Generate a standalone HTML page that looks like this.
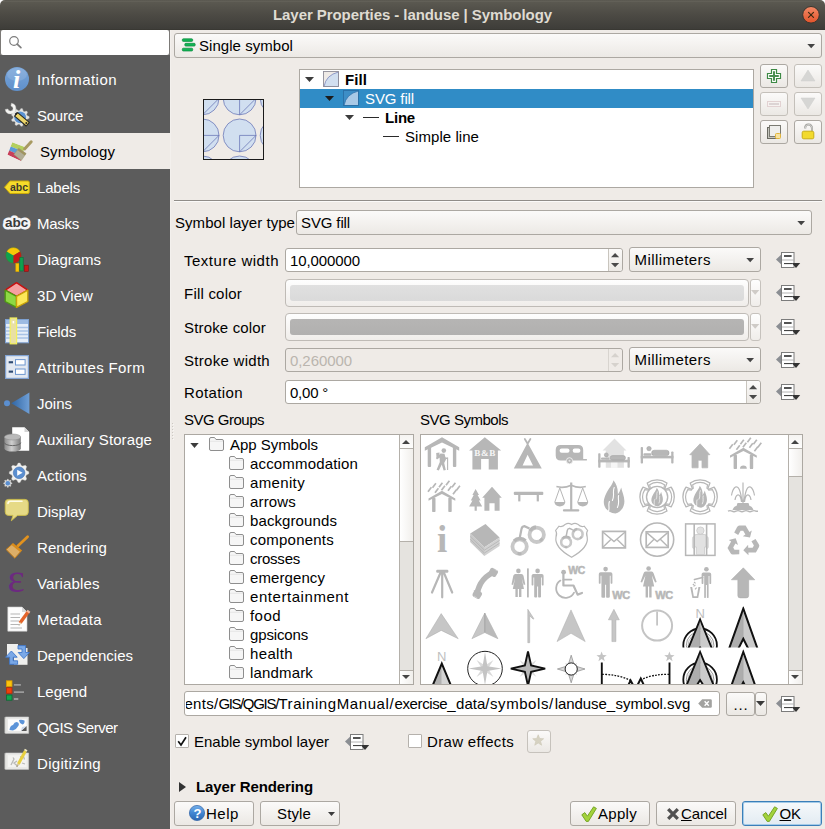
<!DOCTYPE html>
<html><head><meta charset="utf-8"><title>Layer Properties - landuse | Symbology</title>
<style>
html,body{margin:0;padding:0;}
body{width:825px;height:829px;position:relative;overflow:hidden;background:#efebe7;font-family:"Liberation Sans", sans-serif;}
body>div,.a,.t{position:absolute;}
.t{white-space:nowrap;}
svg{display:block;overflow:visible;}
</style></head><body>
<div style="left:0px;top:0px;width:825px;height:30px;background:#fff;"></div>
<div style="left:0px;top:0px;width:825px;height:30px;background:linear-gradient(#55534b 0%,#65635a 4%,#5a5850 8%,#4c4a44 50%,#3e3d39 96%,#36352f 100%);border-radius:5px 5px 0 0;"></div>
<span id="t0" class="t" style="left:273px;top:5.0px;height:20px;line-height:20px;font-size:15px;color:#dfdbd2;font-weight:bold;letter-spacing:-0.073px;">Layer Properties - landuse | Symbology</span>
<svg class="a" style="left:801px;top:6px" width="18" height="18" viewBox="0 0 18 18"><defs><linearGradient id="cg" x1="0" y1="0" x2="0" y2="1"><stop offset="0" stop-color="#f48a67"/><stop offset="1" stop-color="#e2532a"/></linearGradient></defs><circle cx="10" cy="8.8" r="8.3" fill="url(#cg)" stroke="#37352f" stroke-width="1"/><path d="M7.5 6.3 L12.5 11.3 M12.5 6.3 L7.5 11.3" stroke="#3c2a12" stroke-width="1.2" stroke-linecap="round"/></svg>
<div style="left:0px;top:30px;width:170px;height:799px;background:#5c5c5c;"></div>
<div style="left:0px;top:30px;width:170px;height:25px;background:#7c7a77;"></div>
<div style="left:1px;top:30px;width:168px;height:24.5px;background:#fff;border-radius:2px;"></div>
<svg class="a" style="left:7.8px;top:34.9px" width="16" height="16" viewBox="0 0 16 16"><circle cx="6" cy="6" r="4.3" fill="none" stroke="#7d7d7d" stroke-width="1.2"/><path d="M9.2 9.2 L12.9 12.7" stroke="#7d7d7d" stroke-width="1.7" stroke-linecap="round"/></svg>
<span id="t1" class="t" style="left:37px;top:69.5px;height:20px;line-height:20px;font-size:15px;color:#fff;letter-spacing:0.450px;">Information</span>
<span id="t2" class="t" style="left:37px;top:105.5px;height:20px;line-height:20px;font-size:15px;color:#fff;letter-spacing:-0.255px;">Source</span>
<div style="left:0px;top:133px;width:170px;height:36px;background:#efebe7;"></div>
<span id="t3" class="t" style="left:40px;top:141.5px;height:20px;line-height:20px;font-size:15px;color:#000;letter-spacing:0.089px;">Symbology</span>
<span id="t4" class="t" style="left:37px;top:177.5px;height:20px;line-height:20px;font-size:15px;color:#fff;letter-spacing:-0.201px;">Labels</span>
<span id="t5" class="t" style="left:37px;top:213.5px;height:20px;line-height:20px;font-size:15px;color:#fff;letter-spacing:-0.269px;">Masks</span>
<span id="t6" class="t" style="left:37px;top:249.5px;height:20px;line-height:20px;font-size:15px;color:#fff;letter-spacing:-0.023px;">Diagrams</span>
<span id="t7" class="t" style="left:37px;top:285.5px;height:20px;line-height:20px;font-size:15px;color:#fff;letter-spacing:0.058px;">3D View</span>
<span id="t8" class="t" style="left:37px;top:321.5px;height:20px;line-height:20px;font-size:15px;color:#fff;letter-spacing:-0.169px;">Fields</span>
<span id="t9" class="t" style="left:37px;top:357.5px;height:20px;line-height:20px;font-size:15px;color:#fff;letter-spacing:0.365px;">Attributes Form</span>
<span id="t10" class="t" style="left:37px;top:393.5px;height:20px;line-height:20px;font-size:15px;color:#fff;letter-spacing:-0.006px;">Joins</span>
<span id="t11" class="t" style="left:37px;top:429.5px;height:20px;line-height:20px;font-size:15px;color:#fff;letter-spacing:0.095px;">Auxiliary Storage</span>
<span id="t12" class="t" style="left:37px;top:465.5px;height:20px;line-height:20px;font-size:15px;color:#fff;letter-spacing:0.114px;">Actions</span>
<span id="t13" class="t" style="left:37px;top:501.5px;height:20px;line-height:20px;font-size:15px;color:#fff;letter-spacing:-0.070px;">Display</span>
<span id="t14" class="t" style="left:37px;top:537.5px;height:20px;line-height:20px;font-size:15px;color:#fff;letter-spacing:0.087px;">Rendering</span>
<span id="t15" class="t" style="left:37px;top:573.5px;height:20px;line-height:20px;font-size:15px;color:#fff;letter-spacing:0.120px;">Variables</span>
<span id="t16" class="t" style="left:37px;top:609.5px;height:20px;line-height:20px;font-size:15px;color:#fff;letter-spacing:0.307px;">Metadata</span>
<span id="t17" class="t" style="left:37px;top:645.5px;height:20px;line-height:20px;font-size:15px;color:#fff;letter-spacing:0.008px;">Dependencies</span>
<span id="t18" class="t" style="left:37px;top:681.5px;height:20px;line-height:20px;font-size:15px;color:#fff;letter-spacing:-0.010px;">Legend</span>
<span id="t19" class="t" style="left:37px;top:717.5px;height:20px;line-height:20px;font-size:15px;color:#fff;letter-spacing:-0.478px;">QGIS Server</span>
<span id="t20" class="t" style="left:37px;top:753.5px;height:20px;line-height:20px;font-size:15px;color:#fff;letter-spacing:0.314px;">Digitizing</span>
<svg class="a" style="left:5px;top:67px" width="24" height="24" viewBox="0 0 24 24"><defs><linearGradient id="gi" x1="0" y1="0" x2="0" y2="1"><stop offset="0" stop-color="#7aa6da"/><stop offset="1" stop-color="#5f90cb"/></linearGradient></defs><circle cx="12" cy="12" r="12" fill="url(#gi)"/><ellipse cx="12" cy="7.5" rx="10" ry="6.5" fill="#fff" opacity=".13"/><text x="11.6" y="20.8" font-family="Liberation Serif, serif" font-style="italic" font-weight="bold" font-size="26" fill="#fff" text-anchor="middle">i</text></svg>
<svg class="a" style="left:5px;top:103px" width="24" height="24" viewBox="0 0 24 24"><path d="M24.17 13.62 L24.17 15.18 L21.96 16.21 L21.54 17.36 L22.57 19.56 L21.56 20.76 L19.22 20.13 L18.16 20.74 L17.53 23.09 L15.98 23.37 L14.59 21.37 L13.39 21.16 L11.40 22.56 L10.04 21.77 L10.25 19.35 L9.47 18.42 L7.04 18.20 L6.51 16.73 L8.23 15.01 L8.23 13.79 L6.51 12.07 L7.04 10.60 L9.47 10.38 L10.25 9.45 L10.04 7.03 L11.40 6.24 L13.39 7.64 L14.59 7.43 L15.98 5.43 L17.53 5.71 L18.16 8.06 L19.22 8.67 L21.56 8.04 L22.57 9.24 L21.54 11.44 L21.96 12.59Z" fill="#e4e4e2" stroke="#c8c8c6" stroke-width="0.4" stroke-linejoin="round"/><circle cx="15.2" cy="14.4" r="5.9" fill="#5a92d2"/><path d="M8.6 9.3 L11 11.8" stroke="#e9e9e7" stroke-width="3.4"/><path d="M6.44 0.18 A5.4 5.4 0 1 1 0.18 6.44 L2.94 5.95 A2.6 2.6 0 1 0 5.95 2.94 Z" fill="#f4f4f2" stroke="#cfcfcd" stroke-width=".4"/><path d="M12.6 9.6 L24.3 19.4 L21.2 23 L9.6 13.2 Z" fill="#ecd568" stroke="#2c2a22" stroke-width="1.1" stroke-linejoin="round"/><path d="M10.2 11.6 L12 9.8" stroke="#1e1e1e" stroke-width="1.6"/><circle cx="21.3" cy="20" r="1" fill="#2c2a22"/></svg>
<svg class="a" style="left:5px;top:139px" width="24" height="24" viewBox="0 0 24 24"><defs><clipPath id="sh"><path d="M7.2 3.2 L19.8 8 L15.9 21.9 L2.4 15.8 Z"/></clipPath></defs><g clip-path="url(#sh)"><path d="M7.2 3.2 L19.8 8 L18.5 12.6 L5.6 7.4 Z" fill="#b4cf5e"/><path d="M5.6 7.4 L18.5 12.6 L17.2 17.3 L4 11.6 Z" fill="#5a9bd8"/><path d="M4 11.6 L17.2 17.3 L15.9 21.9 L2.4 15.8 Z" fill="#c8405a"/></g><path d="M26.2 2.8 L19.6 10" stroke="#a89a62" stroke-width="3" stroke-linecap="round"/><path d="M13.7 9.3 L21.1 14.5 L16.3 21.5 L8.9 15.4 Z" fill="#b1ad95" stroke="#9a946e" stroke-width=".5"/><path d="M13.7 9.3 L21.1 14.5 L19.8 16.4 L12.4 11 Z" fill="#a09460"/></svg>
<svg class="a" style="left:5px;top:175px" width="24" height="24" viewBox="0 0 24 24"><path d="M-0.5 12.2 L5 6 H23 Q24.3 6 24.3 7.3 V17.2 Q24.3 18.5 23 18.5 H5 Z" fill="#f6dc2a" stroke="#caa90a" stroke-width="1" stroke-linejoin="round"/><text x="14" y="16" font-family="Liberation Sans, sans-serif" font-weight="bold" font-size="10.5" fill="#3a3a30" text-anchor="middle">abc</text></svg>
<svg class="a" style="left:5px;top:211px" width="24" height="24" viewBox="0 0 24 24"><text x="11.5" y="15.8" font-family="Liberation Sans, sans-serif" font-weight="bold" font-size="13.5" fill="#3a3a3a" stroke="#f4f4f6" stroke-width="5" stroke-linejoin="round" paint-order="stroke" text-anchor="middle">abc</text></svg>
<svg class="a" style="left:5px;top:247px" width="24" height="24" viewBox="0 0 24 24"><circle cx="8.4" cy="8.4" r="7.8" fill="#0fa050"/><path d="M8.4 8.4 L1.7 4.4 A7.8 7.8 0 0 1 15.1 4.4 Z" fill="#f8c808"/><path d="M8.4 8.4 L15.1 4.4 A7.8 7.8 0 0 1 8.4 16.2 Z" fill="#c81818"/><circle cx="8.4" cy="8.4" r="7.8" fill="none" stroke="#7a5a10" stroke-width=".5" opacity=".6"/><rect x="10.8" y="16.3" width="3.2" height="8.4" fill="#f8c808" stroke="#d09a00" stroke-width=".6"/><rect x="14.8" y="10.4" width="3.4" height="13.6" fill="#10a050" stroke="#0a7038" stroke-width=".6"/><rect x="19.5" y="18.2" width="3.8" height="6.2" fill="#c81818" stroke="#900c0c" stroke-width=".6"/></svg>
<svg class="a" style="left:5px;top:283px" width="24" height="24" viewBox="0 0 24 24"><path d="M11.5 -0.4 L22.8 7.2 L11.5 13.3 L0.2 7.2 Z" fill="#f6a0a0" stroke="#c81010" stroke-width="1.4" stroke-linejoin="round"/><path d="M0.2 7.2 L11.5 13.3 V24.4 L0.2 18.5 Z" fill="#8ed844" stroke="#4e9a12" stroke-width="1.4" stroke-linejoin="round"/><path d="M22.8 7.2 L11.5 13.3 V24.4 L22.8 18.5 Z" fill="#fbe858" stroke="#c8a208" stroke-width="1.4" stroke-linejoin="round"/></svg>
<svg class="a" style="left:5px;top:319px" width="24" height="24" viewBox="0 0 24 24"><rect x="0.5" y="0.5" width="23" height="23.3" fill="#e6eef8" stroke="#7da0d0" stroke-width="1"/><rect x="1" y="1" width="22" height="4" fill="#9dbbe2"/><path d="M1 8.5 H23 M1 12 H23 M1 15.5 H23 M1 19 H23" stroke="#a9c3e6" stroke-width="1.5"/><rect x="5.2" y="-1" width="6.4" height="25.8" fill="#e9e0a4" stroke="#f4f05a" stroke-width="1.2"/><rect x="7.6" y="2" width="1.6" height="2.4" fill="#fff"/></svg>
<svg class="a" style="left:5px;top:355px" width="24" height="24" viewBox="0 0 24 24"><rect x="0.6" y="0.6" width="22.8" height="22.8" fill="#e2e8f1" stroke="#82a3d3" stroke-width="1.2"/><rect x="3.7" y="6.2" width="4.3" height="2.1" fill="#2d4a72"/><rect x="10.5" y="4.6" width="9.6" height="5.4" fill="#fff" stroke="#6d96cf" stroke-width="1"/><rect x="3.7" y="15.6" width="4.3" height="2.1" fill="#2d4a72"/><rect x="10.5" y="14" width="9.6" height="5.4" fill="#fff" stroke="#6d96cf" stroke-width="1"/></svg>
<svg class="a" style="left:5px;top:391px" width="24" height="24" viewBox="0 0 24 24"><defs><linearGradient id="gj" x1="0" y1="0" x2="1" y2="0"><stop offset="0" stop-color="#2f65a4"/><stop offset="1" stop-color="#6f9fd6"/></linearGradient></defs><circle cx="2" cy="12.3" r="3" fill="#5b8fd0"/><path d="M6.3 12.3 L24.4 1.6 V23 Z" fill="url(#gj)"/></svg>
<svg class="a" style="left:5px;top:427px" width="24" height="24" viewBox="0 0 24 24"><defs><linearGradient id="gd" x1="0" y1="0" x2="1" y2="0"><stop offset="0" stop-color="#8a8a8a"/><stop offset=".45" stop-color="#cfcfcf"/><stop offset="1" stop-color="#7a7a7a"/></linearGradient></defs><path d="M7.2 0.3 H19.5 L24.2 5 V23.7 H7.2 Z" fill="#fff"/><path d="M19.5 0.3 V5 H24.2 Z" fill="#d4d4d4"/><path d="M-0.6 10 V21.6 A8.2 3 0 0 0 15.8 21.6 V10 Z" fill="url(#gd)"/><path d="M-0.6 15.6 A8.2 3 0 0 0 15.8 15.6" fill="none" stroke="#5f5f5f" stroke-width=".9"/><ellipse cx="7.6" cy="10" rx="8.2" ry="3" fill="#b9b9b9" stroke="#8a8a8a" stroke-width=".5"/></svg>
<svg class="a" style="left:5px;top:463px" width="24" height="24" viewBox="0 0 24 24"><path d="M23.85 8.84 L23.85 10.76 L21.37 12.01 L20.80 13.38 L21.68 16.02 L20.32 17.38 L17.68 16.50 L16.31 17.07 L15.06 19.55 L13.14 19.55 L11.89 17.07 L10.52 16.50 L7.88 17.38 L6.52 16.02 L7.40 13.38 L6.83 12.01 L4.35 10.76 L4.35 8.84 L6.83 7.59 L7.40 6.22 L6.52 3.58 L7.88 2.22 L10.52 3.10 L11.89 2.53 L13.14 0.05 L15.06 0.05 L16.31 2.53 L17.68 3.10 L20.32 2.22 L21.68 3.58 L20.80 6.22 L21.37 7.59Z" fill="#f2f2f0" stroke="#c9c9c7" stroke-width="0.4" stroke-linejoin="round"/><circle cx="14.1" cy="9.8" r="5.8" fill="#5b8fd0" stroke="#3f6fb0" stroke-width=".6"/><path d="M12.2 6.8 L17.6 9.8 L12.2 12.8 Z" fill="#fff"/><path d="M7.08 19.88 L7.08 20.72 L5.86 21.23 L5.62 21.81 L6.12 23.03 L5.53 23.62 L4.31 23.12 L3.73 23.36 L3.22 24.58 L2.38 24.58 L1.87 23.36 L1.29 23.12 L0.07 23.62 L-0.52 23.03 L-0.02 21.81 L-0.26 21.23 L-1.48 20.72 L-1.48 19.88 L-0.26 19.37 L-0.02 18.79 L-0.52 17.57 L0.07 16.98 L1.29 17.48 L1.87 17.24 L2.38 16.02 L3.22 16.02 L3.73 17.24 L4.31 17.48 L5.53 16.98 L6.12 17.57 L5.62 18.79 L5.86 19.37Z" fill="#dcdcda" stroke="#b9b9b7" stroke-width="0.3" stroke-linejoin="round"/><circle cx="2.8" cy="20.3" r="2.3" fill="#5b8fd0"/></svg>
<svg class="a" style="left:5px;top:499px" width="24" height="24" viewBox="0 0 24 24"><path d="M3.5 0.4 H20 Q23.3 0.4 23.3 3.7 V13 Q23.3 16.4 20 16.4 H12.5 L6.3 21.8 L8 16.4 H3.5 Q0.2 16.4 0.2 13 V3.7 Q0.2 0.4 3.5 0.4 Z" fill="#e6da86" stroke="#cdbd4a" stroke-width=".9" stroke-linejoin="round"/><path d="M3 4.5 Q3 2.2 5.5 2.2 H17" fill="none" stroke="#fdfbe6" stroke-width="1.6" stroke-linecap="round"/></svg>
<svg class="a" style="left:5px;top:535px" width="24" height="24" viewBox="0 0 24 24"><path d="M22.6 1.8 L12.8 11" stroke="#e2921e" stroke-width="2.8" stroke-linecap="round"/><path d="M8 8.4 L16.7 15.4 L9.8 23.2 L1.1 14.5 Z" fill="#dcae68" stroke="#c27c18" stroke-width="1" stroke-linejoin="round"/><path d="M8 8.4 L16.7 15.4 L15.2 17.1 L6.5 9.9 Z" fill="#d98c1c"/></svg>
<svg class="a" style="left:5px;top:571px" width="24" height="24" viewBox="0 0 24 24"><text x="11.2" y="21" font-family="Liberation Serif, serif" font-size="41" fill="#6c2a80" text-anchor="middle">ε</text></svg>
<svg class="a" style="left:5px;top:607px" width="24" height="24" viewBox="0 0 24 24"><path d="M2.8 0 H17 L22 5 V24.2 H2.8 Z" fill="#fdfdfd" stroke="#c9c9c9" stroke-width=".6"/><path d="M17 0 V5 H22 Z" fill="#d9d9d9"/><path d="M5.5 7 H15 M5.5 10.5 H15 M5.5 14 H14 M5.5 17.5 H14 M5.5 21 H17" stroke="#b5b5b5" stroke-width="1.2"/><path d="M23.4 4.6 L15 16" stroke="#e4642a" stroke-width="3.4"/><path d="M24 3.8 L22.8 5.4" stroke="#f2b9a0" stroke-width="3.4"/><path d="M15.6 15.2 L13.6 18.6 L17 16.6 Z" fill="#e8d6b0"/><path d="M14.3 17.4 L13.6 18.6 L14.8 17.9 Z" fill="#333"/></svg>
<svg class="a" style="left:5px;top:643px" width="24" height="24" viewBox="0 0 24 24"><rect x="2" y="1" width="11" height="13" fill="#f0f0ee"/><rect x="9" y="5" width="13.5" height="16.8" fill="#efefed"/><path d="M13 2.6 H20.6 V9.5 H24.4 L18.8 15.6 L13.2 9.5 H17 V6 H13 Z" fill="#7aa8e6" stroke="#3f78cc" stroke-width=".9" stroke-linejoin="round"/><path d="M12.6 21.3 H4.6 V14.2 H0.6 L6.4 8 L12.2 14.2 H8.2 V17.8 H12.6 Z" fill="#7aa8e6" stroke="#3f78cc" stroke-width=".9" stroke-linejoin="round"/></svg>
<svg class="a" style="left:5px;top:679px" width="24" height="24" viewBox="0 0 24 24"><rect x="1.4" y="1.8" width="5.6" height="5.6" fill="#fcc40c" stroke="#d89a00" stroke-width=".8"/><rect x="1.4" y="8.7" width="5.6" height="5.6" fill="#f0400c" stroke="#b82c06" stroke-width=".8"/><rect x="1.4" y="16" width="5.6" height="5.2" fill="#10a850" stroke="#0a6a32" stroke-width=".8"/><path d="M8.9 5.9 H15.9 M8.9 13.1 H19 M8.9 20 H13.3" stroke="#9b9b9b" stroke-width="1.8"/></svg>
<svg class="a" style="left:5px;top:715px" width="24" height="24" viewBox="0 0 24 24"><path d="M0.6 2 H23.6 V18.4 H0.6 Z" fill="#e9e9e7" stroke="#cfcfcd" stroke-width=".6"/><path d="M1.2 1.4 Q-0.8 2.6 1.2 3.8 V18.2 H-0.4 V2.2 Z" fill="#dadad8"/><rect x="3" y="4.2" width="18.6" height="11.8" fill="#fbfbfb"/><path d="M4.5 15 Q5 10.5 8 10 Q10 6 13 7.5 Q15 9.5 12.5 12 Q11 15 8 15.5 Z" fill="#5b93d8"/><path d="M14 5 Q17 4.5 19.5 5.5 Q20 8.5 17.5 9.5 Q14.5 8.5 14 5 Z" fill="#5b93d8"/><path d="M21.6 11 V16 H16 Z" fill="#555"/><path d="M21.6 11 L16 16 L17 12 Z" fill="#c9d6ea"/></svg>
<svg class="a" style="left:5px;top:751px" width="24" height="24" viewBox="0 0 24 24"><path d="M0.6 2 H23.6 V18.4 H0.6 Z" fill="#e9e9e7" stroke="#cfcfcd" stroke-width=".6"/><path d="M1.2 1.4 Q-0.8 2.6 1.2 3.8 V18.2 H-0.4 V2.2 Z" fill="#dadad8"/><rect x="3" y="4.2" width="18.6" height="11.8" fill="#f3f3f1"/><path d="M6 14 L9 8 L8 6.5 M12 10 L9 12 L12.5 15 M15 6 L18.5 5.5 L19.5 8.5 M17 12 L20 13" stroke="#b9b9b7" stroke-width="1.3" fill="none"/><path d="M20.4 0 L13.4 13" stroke="#e8d040" stroke-width="3"/><path d="M21.2 -1.4 L20.4 0" stroke="#f4ecc0" stroke-width="3"/><path d="M12.1 12.3 L11.6 16 L14.7 13.7 Z" fill="#d8c8a0"/><path d="M11.9 14.6 L11.6 16 L12.8 15.1 Z" fill="#333"/></svg>
<div style="left:170px;top:30px;width:655px;height:799px;background:#efebe7;"></div>
<div style="left:174px;top:33px;width:648px;height:25px;border:1px solid #aca8a2;border-radius:3px;background:linear-gradient(#fbfaf9,#ece9e5);box-sizing:border-box;"></div>
<span id="t21" class="t" style="left:199px;top:36.0px;height:20px;line-height:20px;font-size:15px;color:#000;letter-spacing:0.047px;">Single symbol</span>
<svg class="a" style="left:806.8px;top:43.9px" width="8.4" height="4.3" viewBox="0 0 9 5"><path d="M0 0 L9 0 L4.5 5 Z" fill="#444"/></svg>
<svg class="a" style="left:182px;top:38px" width="14" height="15" viewBox="0 0 14 15"><rect x="0.3" y="0.8" width="10.4" height="2.6" rx="1" fill="#12b455" stroke="#0a8a3c" stroke-width=".7"/><rect x="2.8" y="5.3" width="10.4" height="2.8" rx="1" fill="#12b455" stroke="#0a8a3c" stroke-width=".7"/><rect x="0.3" y="10.2" width="10.4" height="2.8" rx="1" fill="#12b455" stroke="#0a8a3c" stroke-width=".7"/></svg>
<svg class="a" style="left:203px;top:99px" width="61" height="61" viewBox="203 99 61 61"><defs><clipPath id="pc"><rect x="204" y="100" width="59" height="59"/></clipPath></defs><g clip-path="url(#pc)" stroke="#5f6bb0" stroke-width="0.7" fill="#d1dff0"><circle cx="202.6" cy="98.4" r="16.4"/><path d="M202.6 114.8 V98.4 H219.0 Z" fill="none"/><circle cx="202.6" cy="135.4" r="16.4"/><path d="M202.6 151.8 V135.4 H219.0 Z" fill="none"/><circle cx="202.6" cy="172.4" r="16.4"/><path d="M202.6 188.8 V172.4 H219.0 Z" fill="none"/><circle cx="239.6" cy="98.4" r="16.4"/><path d="M239.6 114.8 V98.4 H256.0 Z" fill="none"/><circle cx="239.6" cy="135.4" r="16.4"/><path d="M239.6 151.8 V135.4 H256.0 Z" fill="none"/><circle cx="239.6" cy="172.4" r="16.4"/><path d="M239.6 188.8 V172.4 H256.0 Z" fill="none"/><circle cx="276.6" cy="98.4" r="16.4"/><path d="M276.6 114.8 V98.4 H293.0 Z" fill="none"/><circle cx="276.6" cy="135.4" r="16.4"/><path d="M276.6 151.8 V135.4 H293.0 Z" fill="none"/><circle cx="276.6" cy="172.4" r="16.4"/><path d="M276.6 188.8 V172.4 H293.0 Z" fill="none"/></g><rect x="203.5" y="99.5" width="60" height="60" fill="none" stroke="#1a1a1a" stroke-width="1"/></svg>
<div style="left:299px;top:69px;width:455px;height:119px;background:#fff;border:1px solid #aca8a2;box-sizing:border-box;"></div>
<div style="left:300px;top:89px;width:453px;height:19px;background:#308cc6;"></div>
<svg class="a" style="left:305.1px;top:76.9px" width="9" height="5" viewBox="0 0 9 5"><path d="M0 0 L9 0 L4.5 5 Z" fill="#3c3c3c"/></svg><svg class="a" style="left:323px;top:71px" width="16" height="16" viewBox="0 0 16 16"><rect x="0" y="0" width="16" height="16" fill="#efebe7"/><path d="M1 15.5 Q3 4 15.5 1 V15.5 Z" fill="#d1dff0" stroke="#6a78b8" stroke-width=".7"/><rect x="0.5" y="0.5" width="15" height="15" fill="none" stroke="#8f8f9a" stroke-width=".9"/></svg><svg class="a" style="left:325.1px;top:95.7px" width="9" height="5" viewBox="0 0 9 5"><path d="M0 0 L9 0 L4.5 5 Z" fill="#1c1c1c"/></svg><svg class="a" style="left:343px;top:90px" width="16" height="16" viewBox="0 0 16 16"><rect x="0" y="0" width="16" height="16" fill="#3d8ec6"/><path d="M1 15.5 Q3 4 15.5 1 V15.5 Z" fill="#a9c9e6" stroke="#2f6fa8" stroke-width=".7"/><rect x="0.5" y="0.5" width="15" height="15" fill="none" stroke="#2a6fa5" stroke-width=".9"/></svg><svg class="a" style="left:345.1px;top:114.5px" width="9" height="5" viewBox="0 0 9 5"><path d="M0 0 L9 0 L4.5 5 Z" fill="#3c3c3c"/></svg><div style="left:363px;top:117px;width:16px;height:1px;background:#2a2a2a"></div><div style="left:383px;top:136px;width:16px;height:1px;background:#2a2a2a"></div>
<span id="t22" class="t" style="left:345px;top:69.5px;height:20px;line-height:20px;font-size:15px;color:#000;font-weight:bold;letter-spacing:0.082px;">Fill</span>
<span id="t23" class="t" style="left:365px;top:88.5px;height:20px;line-height:20px;font-size:15px;color:#fff;letter-spacing:-0.127px;">SVG fill</span>
<span id="t24" class="t" style="left:385px;top:107.5px;height:20px;line-height:20px;font-size:15px;color:#000;font-weight:bold;letter-spacing:-0.211px;">Line</span>
<span id="t25" class="t" style="left:405px;top:126.5px;height:20px;line-height:20px;font-size:15px;color:#000;letter-spacing:0.057px;">Simple line</span>
<div style="left:760px;top:64px;width:28px;height:24px;border:1px solid #aca8a2;border-radius:3px;background:linear-gradient(#fbfaf9,#ebe8e4);box-sizing:border-box;"></div>
<div style="left:794px;top:64px;width:28px;height:24px;border:1px solid #aca8a2;border-radius:3px;background:linear-gradient(#fbfaf9,#ebe8e4);box-sizing:border-box;border-color:#c4c0ba;"></div>
<div style="left:760px;top:92px;width:28px;height:24px;border:1px solid #aca8a2;border-radius:3px;background:linear-gradient(#fbfaf9,#ebe8e4);box-sizing:border-box;border-color:#c4c0ba;"></div>
<div style="left:794px;top:92px;width:28px;height:24px;border:1px solid #aca8a2;border-radius:3px;background:linear-gradient(#fbfaf9,#ebe8e4);box-sizing:border-box;border-color:#c4c0ba;"></div>
<div style="left:760px;top:120px;width:28px;height:24px;border:1px solid #aca8a2;border-radius:3px;background:linear-gradient(#fbfaf9,#ebe8e4);box-sizing:border-box;"></div>
<div style="left:794px;top:120px;width:28px;height:24px;border:1px solid #aca8a2;border-radius:3px;background:linear-gradient(#fbfaf9,#ebe8e4);box-sizing:border-box;"></div>
<svg class="a" style="left:766px;top:68px" width="16" height="16" viewBox="0 0 16 16"><path d="M5.5 1.5 H10.5 V5.5 H14.5 V10.5 H10.5 V14.5 H5.5 V10.5 H1.5 V5.5 H5.5 Z" fill="#fff" stroke="#3d8a45" stroke-width="1.2"/><path d="M7 3.2 H9 V7 H12.8 V9 H9 V12.8 H7 V9 H3.2 V7 H7 Z" fill="#4b8f52"/></svg><svg class="a" style="left:801px;top:70px" width="14" height="11" viewBox="0 0 14 11"><path d="M7 0 L14 11 H0 Z" fill="#d6d6d4" stroke="#cfcfcd" stroke-width=".5"/></svg><svg class="a" style="left:767px;top:101px" width="14" height="6" viewBox="0 0 14 6"><rect x=".5" y=".5" width="13" height="5" fill="#f6f2f0" stroke="#e2d2d2" stroke-width="1"/><rect x="2" y="2" width="10" height="2" fill="#dcd4d4"/></svg><svg class="a" style="left:801px;top:98px" width="14" height="11" viewBox="0 0 14 11"><path d="M0 0 H14 L7 11 Z" fill="#d6d6d4" stroke="#cfcfcd" stroke-width=".5"/></svg><svg class="a" style="left:766px;top:124px" width="16" height="16" viewBox="0 0 16 16"><rect x="1.5" y="3.5" width="11" height="11" fill="#c4c4bc" stroke="#6a6a62" stroke-width="1"/><rect x="3.5" y="1.5" width="11" height="11" fill="#eeeeec" stroke="#7a7a72" stroke-width="1"/><rect x="9.5" y="9.5" width="5" height="5" rx="1" fill="#f7e3a0" stroke="#e2b53a" stroke-width="1"/></svg><svg class="a" style="left:801px;top:123px" width="14" height="17" viewBox="0 0 14 17"><path d="M4.2 5.5 Q4 1.5 7.5 1.5 Q11 1.5 11 6 V9" fill="none" stroke="#9a9a96" stroke-width="2"/><path d="M4.2 5.5 Q4 1.5 7.5 1.5 Q11 1.5 11 6 V9" fill="none" stroke="#e8e8e6" stroke-width=".7"/><rect x="1.2" y="8.2" width="11.6" height="7.6" rx="1.5" fill="#f2da2c" stroke="#c9ae12" stroke-width="1"/></svg>
<div style="left:172px;top:423px;width:1px;height:1px;background:#cdc9c4;"></div>
<div style="left:173px;top:424px;width:1px;height:1px;background:#f8f6f4;"></div>
<div style="left:172px;top:426px;width:1px;height:1px;background:#cdc9c4;"></div>
<div style="left:173px;top:427px;width:1px;height:1px;background:#f8f6f4;"></div>
<div style="left:172px;top:429px;width:1px;height:1px;background:#cdc9c4;"></div>
<div style="left:173px;top:430px;width:1px;height:1px;background:#f8f6f4;"></div>
<div style="left:172px;top:432px;width:1px;height:1px;background:#cdc9c4;"></div>
<div style="left:173px;top:433px;width:1px;height:1px;background:#f8f6f4;"></div>
<div style="left:172px;top:435px;width:1px;height:1px;background:#cdc9c4;"></div>
<div style="left:173px;top:436px;width:1px;height:1px;background:#f8f6f4;"></div>
<div style="left:172px;top:438px;width:1px;height:1px;background:#cdc9c4;"></div>
<div style="left:173px;top:439px;width:1px;height:1px;background:#f8f6f4;"></div>
<div style="left:170px;top:30px;width:1px;height:799px;background:#f3f0ed;"></div>
<div style="left:174px;top:200px;width:648px;height:1px;background:#908d89;"></div>
<div style="left:174px;top:201px;width:648px;height:1px;background:#fbfaf9;"></div>
<span id="t26" class="t" style="left:175px;top:212.5px;height:20px;line-height:20px;font-size:15px;color:#000;letter-spacing:0.046px;">Symbol layer type</span>
<div style="left:296px;top:210px;width:516px;height:25px;border:1px solid #aca8a2;border-radius:3px;background:linear-gradient(#fbfaf9,#ece9e5);box-sizing:border-box;"></div>
<span id="t27" class="t" style="left:301px;top:213.0px;height:20px;line-height:20px;font-size:15px;color:#000;letter-spacing:-0.127px;">SVG fill</span>
<svg class="a" style="left:796.8px;top:220.9px" width="8.4" height="4.3" viewBox="0 0 9 5"><path d="M0 0 L9 0 L4.5 5 Z" fill="#444"/></svg>
<span id="t28" class="t" style="left:184px;top:250.5px;height:20px;line-height:20px;font-size:15px;color:#000;letter-spacing:0.510px;">Texture width</span>
<div style="left:285px;top:248px;width:338px;height:24px;border:1px solid #aca8a2;border-radius:3px;background:#fff;box-sizing:border-box;"></div>
<div style="left:608px;top:249px;width:1px;height:22px;background:#c9c5be;"></div>
<div style="left:609px;top:249px;width:13px;height:22px;background:linear-gradient(#fbfaf9,#ece9e5);border-radius:0 3px 3px 0;"></div>
<svg class="a" style="left:610.9px;top:253px" width="8.2" height="14.4" viewBox="0 0 8.2 14.4"><path d="M0 4.3 L4.1 0 L8.2 4.3 Z M0 10 L8.2 10 L4.1 14.3 Z" fill="#4a4a4a"/></svg>
<span id="t29" class="t" style="left:290px;top:250.5px;height:20px;line-height:20px;font-size:15px;color:#000;letter-spacing:-0.101px;">10,000000</span>
<div style="left:629px;top:247px;width:132px;height:25px;border:1px solid #aca8a2;border-radius:3px;background:linear-gradient(#fbfaf9,#ece9e5);box-sizing:border-box;"></div>
<span id="t30" class="t" style="left:634.5px;top:250.0px;height:20px;line-height:20px;font-size:15px;color:#000;letter-spacing:0.439px;">Millimeters</span>
<svg class="a" style="left:745.8px;top:257.9px" width="8.4" height="4.3" viewBox="0 0 9 5"><path d="M0 0 L9 0 L4.5 5 Z" fill="#444"/></svg>
<svg class="a" style="left:776px;top:252px" width="25" height="17" viewBox="0 0 25 17"><path d="M0 7.5 L5.5 2.2 V12.8 Z" fill="#8b8e93"/><rect x="5.5" y="0.5" width="12.5" height="15" fill="#fff" stroke="#7c7c7c" stroke-width="1"/><path d="M6 8 H17.5" stroke="#a2a2a2" stroke-width=".8"/><rect x="8" y="3" width="7.6" height="2" fill="#555"/><rect x="8" y="11" width="8" height="1.1" fill="#444"/><path d="M15.7 11 H24.2 L20 16 Z" fill="#333"/></svg>
<span id="t31" class="t" style="left:184px;top:283.5px;height:20px;line-height:20px;font-size:15px;color:#000;letter-spacing:0.216px;">Fill color</span>
<div style="left:285px;top:279px;width:464px;height:28px;border:1px solid #bfbbb6;border-radius:4px;background:linear-gradient(#fefefe,#f0edea);box-sizing:border-box;"></div>
<div style="left:290px;top:285px;width:454px;height:16px;background:linear-gradient(#e0e0e0,#dadada);border-radius:3px;"></div>
<div style="left:750px;top:279px;width:11px;height:28px;border:1px solid #c6c2bd;border-radius:3px;background:linear-gradient(#fefefe,#f0edea);box-sizing:border-box;"></div>
<svg class="a" style="left:750.5px;top:290px" width="8.4" height="4.8" viewBox="0 0 9 5"><path d="M0 0 L9 0 L4.5 5 Z" fill="#cfcbc7"/></svg>
<svg class="a" style="left:776px;top:285px" width="25" height="17" viewBox="0 0 25 17"><path d="M0 7.5 L5.5 2.2 V12.8 Z" fill="#8b8e93"/><rect x="5.5" y="0.5" width="12.5" height="15" fill="#fff" stroke="#7c7c7c" stroke-width="1"/><path d="M6 8 H17.5" stroke="#a2a2a2" stroke-width=".8"/><rect x="8" y="3" width="7.6" height="2" fill="#555"/><rect x="8" y="11" width="8" height="1.1" fill="#444"/><path d="M15.7 11 H24.2 L20 16 Z" fill="#333"/></svg>
<span id="t32" class="t" style="left:184px;top:317.5px;height:20px;line-height:20px;font-size:15px;color:#000;letter-spacing:0.163px;">Stroke color</span>
<div style="left:285px;top:313px;width:464px;height:28px;border:1px solid #bfbbb6;border-radius:4px;background:linear-gradient(#fefefe,#f0edea);box-sizing:border-box;"></div>
<div style="left:290px;top:319px;width:454px;height:16px;background:linear-gradient(#b6b5b4,#b1b0af);border-radius:3px;"></div>
<div style="left:750px;top:313px;width:11px;height:28px;border:1px solid #c6c2bd;border-radius:3px;background:linear-gradient(#fefefe,#f0edea);box-sizing:border-box;"></div>
<svg class="a" style="left:750.5px;top:324px" width="8.4" height="4.8" viewBox="0 0 9 5"><path d="M0 0 L9 0 L4.5 5 Z" fill="#cfcbc7"/></svg>
<svg class="a" style="left:776px;top:319px" width="25" height="17" viewBox="0 0 25 17"><path d="M0 7.5 L5.5 2.2 V12.8 Z" fill="#8b8e93"/><rect x="5.5" y="0.5" width="12.5" height="15" fill="#fff" stroke="#7c7c7c" stroke-width="1"/><path d="M6 8 H17.5" stroke="#a2a2a2" stroke-width=".8"/><rect x="8" y="3" width="7.6" height="2" fill="#555"/><rect x="8" y="11" width="8" height="1.1" fill="#444"/><path d="M15.7 11 H24.2 L20 16 Z" fill="#333"/></svg>
<span id="t33" class="t" style="left:184px;top:350.5px;height:20px;line-height:20px;font-size:15px;color:#000;letter-spacing:0.288px;">Stroke width</span>
<div style="left:285px;top:348px;width:338px;height:24px;border:1px solid #aca8a2;border-radius:3px;background:#efebe7;box-sizing:border-box;"></div>
<div style="left:608px;top:349px;width:1px;height:22px;background:#d8d4cf;"></div>
<div style="left:609px;top:349px;width:13px;height:22px;background:#efebe7;border-radius:0 3px 3px 0;"></div>
<svg class="a" style="left:610.9px;top:353px" width="8.2" height="14.4" viewBox="0 0 8.2 14.4"><path d="M0 4.3 L4.1 0 L8.2 4.3 Z M0 10 L8.2 10 L4.1 14.3 Z" fill="#d6d2cd"/></svg>
<span id="t34" class="t" style="left:290px;top:350.5px;height:20px;line-height:20px;font-size:15px;color:#bab5ae;letter-spacing:-0.072px;">0,260000</span>
<div style="left:629px;top:347px;width:132px;height:25px;border:1px solid #aca8a2;border-radius:3px;background:linear-gradient(#fbfaf9,#ece9e5);box-sizing:border-box;"></div>
<span id="t35" class="t" style="left:634.5px;top:350.0px;height:20px;line-height:20px;font-size:15px;color:#000;letter-spacing:0.439px;">Millimeters</span>
<svg class="a" style="left:745.8px;top:357.9px" width="8.4" height="4.3" viewBox="0 0 9 5"><path d="M0 0 L9 0 L4.5 5 Z" fill="#444"/></svg>
<svg class="a" style="left:776px;top:352px" width="25" height="17" viewBox="0 0 25 17"><path d="M0 7.5 L5.5 2.2 V12.8 Z" fill="#8b8e93"/><rect x="5.5" y="0.5" width="12.5" height="15" fill="#fff" stroke="#7c7c7c" stroke-width="1"/><path d="M6 8 H17.5" stroke="#a2a2a2" stroke-width=".8"/><rect x="8" y="3" width="7.6" height="2" fill="#555"/><rect x="8" y="11" width="8" height="1.1" fill="#444"/><path d="M15.7 11 H24.2 L20 16 Z" fill="#333"/></svg>
<span id="t36" class="t" style="left:184px;top:382.5px;height:20px;line-height:20px;font-size:15px;color:#000;letter-spacing:0.391px;">Rotation</span>
<div style="left:285px;top:380px;width:476px;height:24px;border:1px solid #aca8a2;border-radius:3px;background:#fff;box-sizing:border-box;"></div>
<div style="left:746px;top:381px;width:1px;height:22px;background:#c9c5be;"></div>
<div style="left:747px;top:381px;width:13px;height:22px;background:linear-gradient(#fbfaf9,#ece9e5);border-radius:0 3px 3px 0;"></div>
<svg class="a" style="left:748.9px;top:385px" width="8.2" height="14.4" viewBox="0 0 8.2 14.4"><path d="M0 4.3 L4.1 0 L8.2 4.3 Z M0 10 L8.2 10 L4.1 14.3 Z" fill="#4a4a4a"/></svg>
<span id="t37" class="t" style="left:290px;top:382.5px;height:20px;line-height:20px;font-size:15px;color:#000;letter-spacing:-0.229px;">0,00 °</span>
<svg class="a" style="left:776px;top:384px" width="25" height="17" viewBox="0 0 25 17"><path d="M0 7.5 L5.5 2.2 V12.8 Z" fill="#8b8e93"/><rect x="5.5" y="0.5" width="12.5" height="15" fill="#fff" stroke="#7c7c7c" stroke-width="1"/><path d="M6 8 H17.5" stroke="#a2a2a2" stroke-width=".8"/><rect x="8" y="3" width="7.6" height="2" fill="#555"/><rect x="8" y="11" width="8" height="1.1" fill="#444"/><path d="M15.7 11 H24.2 L20 16 Z" fill="#333"/></svg>
<span id="t38" class="t" style="left:184px;top:410.0px;height:20px;line-height:20px;font-size:15px;color:#000;letter-spacing:-0.505px;">SVG Groups</span>
<div style="left:184px;top:434px;width:230px;height:251px;background:#fff;border:1px solid #aca8a2;box-sizing:border-box;"></div>
<div style="left:399px;top:435px;width:14px;height:249px;background:#e5e3df;border-left:1px solid #b4b0aa;box-sizing:border-box;"></div>
<div style="left:399px;top:435px;width:14px;height:14px;background:linear-gradient(#f6f4f2,#fdfdfc);border-left:1px solid #b4b0aa;border-bottom:1px solid #b4b0aa;box-sizing:border-box;"></div>
<div style="left:399px;top:670px;width:14px;height:14px;background:linear-gradient(90deg,#ffffff,#f1efec);border-left:1px solid #b4b0aa;border-top:1px solid #b4b0aa;box-sizing:border-box;"></div>
<div style="left:399px;top:449px;width:14px;height:93px;background:linear-gradient(90deg,#ffffff,#f1efec);border-left:1px solid #b4b0aa;border-bottom:1px solid #b4b0aa;box-sizing:border-box;"></div>
<svg class="a" style="left:402px;top:440px" width="8" height="4" viewBox="0 0 8 4"><path d="M0 4 L8 4 L4 0 Z" fill="#444"/></svg>
<svg class="a" style="left:402px;top:675px" width="8" height="4" viewBox="0 0 8 4"><path d="M0 0 L8 0 L4 4 Z" fill="#444"/></svg>
<svg class="a" style="left:190.4px;top:442.5px" width="9" height="5" viewBox="0 0 10 6"><path d="M0 0 L10 0 L5 6 Z" fill="#3c3c3c"/></svg>
<svg class="a" style="left:209px;top:437.0px" width="15" height="14" viewBox="0 0 15 14"><path d="M0.5 2 Q0.5 0.5 2 0.5 H5.5 L7 2.5 H13 Q14.5 2.5 14.5 4 V12 Q14.5 13.5 13 13.5 H2 Q0.5 13.5 0.5 12 Z" fill="#f6f6f6" stroke="#8e8e8e" stroke-width="1"/><path d="M1 4.3 H14" stroke="#e6e6e6" stroke-width="1"/></svg>
<span id="t39" class="t" style="left:230px;top:434.5px;height:20px;line-height:20px;font-size:15px;color:#000;letter-spacing:-0.034px;">App Symbols</span>
<svg class="a" style="left:229px;top:456.0px" width="15" height="14" viewBox="0 0 15 14"><path d="M0.5 2 Q0.5 0.5 2 0.5 H5.5 L7 2.5 H13 Q14.5 2.5 14.5 4 V12 Q14.5 13.5 13 13.5 H2 Q0.5 13.5 0.5 12 Z" fill="#f6f6f6" stroke="#8e8e8e" stroke-width="1"/><path d="M1 4.3 H14" stroke="#e6e6e6" stroke-width="1"/></svg>
<span id="t40" class="t" style="left:250px;top:453.5px;height:20px;line-height:20px;font-size:15px;color:#000;letter-spacing:0.162px;">accommodation</span>
<svg class="a" style="left:229px;top:475.0px" width="15" height="14" viewBox="0 0 15 14"><path d="M0.5 2 Q0.5 0.5 2 0.5 H5.5 L7 2.5 H13 Q14.5 2.5 14.5 4 V12 Q14.5 13.5 13 13.5 H2 Q0.5 13.5 0.5 12 Z" fill="#f6f6f6" stroke="#8e8e8e" stroke-width="1"/><path d="M1 4.3 H14" stroke="#e6e6e6" stroke-width="1"/></svg>
<span id="t41" class="t" style="left:250px;top:472.5px;height:20px;line-height:20px;font-size:15px;color:#000;letter-spacing:0.353px;">amenity</span>
<svg class="a" style="left:229px;top:494.0px" width="15" height="14" viewBox="0 0 15 14"><path d="M0.5 2 Q0.5 0.5 2 0.5 H5.5 L7 2.5 H13 Q14.5 2.5 14.5 4 V12 Q14.5 13.5 13 13.5 H2 Q0.5 13.5 0.5 12 Z" fill="#f6f6f6" stroke="#8e8e8e" stroke-width="1"/><path d="M1 4.3 H14" stroke="#e6e6e6" stroke-width="1"/></svg>
<span id="t42" class="t" style="left:250px;top:491.5px;height:20px;line-height:20px;font-size:15px;color:#000;letter-spacing:0.164px;">arrows</span>
<svg class="a" style="left:229px;top:513.0px" width="15" height="14" viewBox="0 0 15 14"><path d="M0.5 2 Q0.5 0.5 2 0.5 H5.5 L7 2.5 H13 Q14.5 2.5 14.5 4 V12 Q14.5 13.5 13 13.5 H2 Q0.5 13.5 0.5 12 Z" fill="#f6f6f6" stroke="#8e8e8e" stroke-width="1"/><path d="M1 4.3 H14" stroke="#e6e6e6" stroke-width="1"/></svg>
<span id="t43" class="t" style="left:250px;top:510.5px;height:20px;line-height:20px;font-size:15px;color:#000;letter-spacing:0.099px;">backgrounds</span>
<svg class="a" style="left:229px;top:532.0px" width="15" height="14" viewBox="0 0 15 14"><path d="M0.5 2 Q0.5 0.5 2 0.5 H5.5 L7 2.5 H13 Q14.5 2.5 14.5 4 V12 Q14.5 13.5 13 13.5 H2 Q0.5 13.5 0.5 12 Z" fill="#f6f6f6" stroke="#8e8e8e" stroke-width="1"/><path d="M1 4.3 H14" stroke="#e6e6e6" stroke-width="1"/></svg>
<span id="t44" class="t" style="left:250px;top:529.5px;height:20px;line-height:20px;font-size:15px;color:#000;letter-spacing:0.228px;">components</span>
<svg class="a" style="left:229px;top:551.0px" width="15" height="14" viewBox="0 0 15 14"><path d="M0.5 2 Q0.5 0.5 2 0.5 H5.5 L7 2.5 H13 Q14.5 2.5 14.5 4 V12 Q14.5 13.5 13 13.5 H2 Q0.5 13.5 0.5 12 Z" fill="#f6f6f6" stroke="#8e8e8e" stroke-width="1"/><path d="M1 4.3 H14" stroke="#e6e6e6" stroke-width="1"/></svg>
<span id="t45" class="t" style="left:250px;top:548.5px;height:20px;line-height:20px;font-size:15px;color:#000;letter-spacing:-0.241px;">crosses</span>
<svg class="a" style="left:229px;top:570.0px" width="15" height="14" viewBox="0 0 15 14"><path d="M0.5 2 Q0.5 0.5 2 0.5 H5.5 L7 2.5 H13 Q14.5 2.5 14.5 4 V12 Q14.5 13.5 13 13.5 H2 Q0.5 13.5 0.5 12 Z" fill="#f6f6f6" stroke="#8e8e8e" stroke-width="1"/><path d="M1 4.3 H14" stroke="#e6e6e6" stroke-width="1"/></svg>
<span id="t46" class="t" style="left:250px;top:567.5px;height:20px;line-height:20px;font-size:15px;color:#000;letter-spacing:0.089px;">emergency</span>
<svg class="a" style="left:229px;top:589.0px" width="15" height="14" viewBox="0 0 15 14"><path d="M0.5 2 Q0.5 0.5 2 0.5 H5.5 L7 2.5 H13 Q14.5 2.5 14.5 4 V12 Q14.5 13.5 13 13.5 H2 Q0.5 13.5 0.5 12 Z" fill="#f6f6f6" stroke="#8e8e8e" stroke-width="1"/><path d="M1 4.3 H14" stroke="#e6e6e6" stroke-width="1"/></svg>
<span id="t47" class="t" style="left:250px;top:586.5px;height:20px;line-height:20px;font-size:15px;color:#000;letter-spacing:0.559px;">entertainment</span>
<svg class="a" style="left:229px;top:608.0px" width="15" height="14" viewBox="0 0 15 14"><path d="M0.5 2 Q0.5 0.5 2 0.5 H5.5 L7 2.5 H13 Q14.5 2.5 14.5 4 V12 Q14.5 13.5 13 13.5 H2 Q0.5 13.5 0.5 12 Z" fill="#f6f6f6" stroke="#8e8e8e" stroke-width="1"/><path d="M1 4.3 H14" stroke="#e6e6e6" stroke-width="1"/></svg>
<span id="t48" class="t" style="left:250px;top:605.5px;height:20px;line-height:20px;font-size:15px;color:#000;letter-spacing:0.449px;">food</span>
<svg class="a" style="left:229px;top:627.0px" width="15" height="14" viewBox="0 0 15 14"><path d="M0.5 2 Q0.5 0.5 2 0.5 H5.5 L7 2.5 H13 Q14.5 2.5 14.5 4 V12 Q14.5 13.5 13 13.5 H2 Q0.5 13.5 0.5 12 Z" fill="#f6f6f6" stroke="#8e8e8e" stroke-width="1"/><path d="M1 4.3 H14" stroke="#e6e6e6" stroke-width="1"/></svg>
<span id="t49" class="t" style="left:250px;top:624.5px;height:20px;line-height:20px;font-size:15px;color:#000;letter-spacing:-0.150px;">gpsicons</span>
<svg class="a" style="left:229px;top:646.0px" width="15" height="14" viewBox="0 0 15 14"><path d="M0.5 2 Q0.5 0.5 2 0.5 H5.5 L7 2.5 H13 Q14.5 2.5 14.5 4 V12 Q14.5 13.5 13 13.5 H2 Q0.5 13.5 0.5 12 Z" fill="#f6f6f6" stroke="#8e8e8e" stroke-width="1"/><path d="M1 4.3 H14" stroke="#e6e6e6" stroke-width="1"/></svg>
<span id="t50" class="t" style="left:250px;top:643.5px;height:20px;line-height:20px;font-size:15px;color:#000;letter-spacing:0.354px;">health</span>
<svg class="a" style="left:229px;top:665.0px" width="15" height="14" viewBox="0 0 15 14"><path d="M0.5 2 Q0.5 0.5 2 0.5 H5.5 L7 2.5 H13 Q14.5 2.5 14.5 4 V12 Q14.5 13.5 13 13.5 H2 Q0.5 13.5 0.5 12 Z" fill="#f6f6f6" stroke="#8e8e8e" stroke-width="1"/><path d="M1 4.3 H14" stroke="#e6e6e6" stroke-width="1"/></svg>
<span id="t51" class="t" style="left:250px;top:662.5px;height:20px;line-height:20px;font-size:15px;color:#000;letter-spacing:0.162px;">landmark</span>
<span id="t52" class="t" style="left:420px;top:410.0px;height:20px;line-height:20px;font-size:15px;color:#000;letter-spacing:-0.489px;">SVG Symbols</span>
<div style="left:420px;top:434px;width:383px;height:251px;background:#fff;border:1px solid #aca8a2;box-sizing:border-box;"></div>
<div style="left:788px;top:435px;width:14px;height:249px;background:#e5e3df;border-left:1px solid #b4b0aa;box-sizing:border-box;"></div>
<div style="left:788px;top:435px;width:14px;height:14px;background:linear-gradient(#f6f4f2,#fdfdfc);border-left:1px solid #b4b0aa;border-bottom:1px solid #b4b0aa;box-sizing:border-box;"></div>
<div style="left:788px;top:670px;width:14px;height:14px;background:linear-gradient(90deg,#ffffff,#f1efec);border-left:1px solid #b4b0aa;border-top:1px solid #b4b0aa;box-sizing:border-box;"></div>
<div style="left:788px;top:449px;width:14px;height:28px;background:linear-gradient(90deg,#ffffff,#f1efec);border-left:1px solid #b4b0aa;border-bottom:1px solid #b4b0aa;box-sizing:border-box;"></div>
<svg class="a" style="left:791px;top:440px" width="8" height="4" viewBox="0 0 8 4"><path d="M0 4 L8 4 L4 0 Z" fill="#444"/></svg>
<svg class="a" style="left:791px;top:675px" width="8" height="4" viewBox="0 0 8 4"><path d="M0 0 L8 0 L4 4 Z" fill="#444"/></svg>
<svg class="a" style="left:421px;top:435px" width="367" height="249" viewBox="421 435 367 249"><defs>
<clipPath id="rc0"><rect x="421" y="435" width="367" height="40.5"/></clipPath>
<clipPath id="rc1"><rect x="421" y="477.5" width="367" height="41.0"/></clipPath>
<clipPath id="rc2"><rect x="421" y="520.5" width="367" height="41.0"/></clipPath>
<clipPath id="rc3"><rect x="421" y="563.5" width="367" height="41.0"/></clipPath>
<clipPath id="rc4"><rect x="421" y="606.5" width="367" height="41.0"/></clipPath>
<clipPath id="rc5"><rect x="421" y="649.5" width="367" height="34.5"/></clipPath>
</defs>
<g clip-path="url(#rc0)">
<g transform="translate(425 437)"><path d="M-0.2 10.3 L17.0 0.3 L34.2 10.3 V13.700000000000001 L17.0 5.5 L-0.2 13.700000000000001 Z" fill="#b7b7b7"/><rect x="2.7" y="9.3" width="3.3999999999999995" height="20.7" rx="1" fill="#b7b7b7"/><rect x="27.9" y="9.3" width="3.400000000000002" height="20.7" rx="1" fill="#b7b7b7"/><circle cx="18.8" cy="13.6" r="2.3" fill="#b7b7b7"/><path d="M15.5 16.5 L19.5 16.8 L21 22.5 L19.2 26 L20.8 33 L18.6 33.4 L16.8 27.5 L13.8 33.6 L11.6 32.8 L14.8 25 L14.6 20.5 L12 22.5 L11 21 Z" fill="#b7b7b7"/><path d="M11.2 16 L14.5 15.6 L14.2 21 L11.5 21.5 Z" fill="#b7b7b7"/><path d="M22.6 20.5 V33" stroke="#b7b7b7" stroke-width="1.1"/><path d="M20 21 L22.6 21.5" stroke="#b7b7b7" stroke-width="1.4"/></g>
<g transform="translate(468 437)"><path d="M1.1 13.4 L16.8 0.3 L33.2 13.4 L29.9 13.4 V32.6 H20.7 V22 H13.1 V32.6 H4.4 V13.4 Z" fill="#b7b7b7"/><text x="17.2" y="19.4" font-family="Liberation Serif, serif" font-weight="bold" font-size="9.2" fill="#f6f6f6" text-anchor="middle" letter-spacing=".6">B&amp;B</text></g>
<g transform="translate(511 437)"><path d="M16.6 5.7 L30.8 31.5 H2.8 Z M16.6 17.7 L11.6 28.6 H22 Z" fill="#b7b7b7" fill-rule="evenodd"/><path d="M13.8 2 L16.6 6.8 L19.4 2" stroke="#b7b7b7" stroke-width="1.8" fill="none" stroke-linecap="round"/></g>
<g transform="translate(554 437)"><path d="M6.7 7.9 H24.2 Q29.2 7.9 29.2 12.9 V22 H32.9 V23.4 H19 A3.6 3.6 0 0 1 12 23.4 H6.7 Q1.7 23.4 1.7 18.4 V12.9 Q1.7 7.9 6.7 7.9 Z" fill="#b7b7b7"/><rect x="5.6" y="11.6" width="9.9" height="4.2" rx="2" fill="#fff"/><rect x="18.7" y="11.6" width="7.7" height="4.2" rx="2" fill="#fff"/><circle cx="15.5" cy="23.8" r="3.1" fill="#b7b7b7" stroke="#f2f2f2" stroke-width=".9"/><circle cx="15.5" cy="23.8" r="1" fill="#e8e8e8"/></g>
<g transform="translate(597 437)"><path d="M5.5 13.4 L17.5 1.4 L29.5 13.4 H26.9 V30.8 H8.8 V13.4 Z" fill="#e2e2e2"/><rect x="14" y="25" width="6.5" height="5.8" fill="#fff" opacity=".7"/><rect x="1.2" y="16.2" width="2.3" height="14.600000000000001" rx=".8" fill="#b7b7b7"/><rect x="30.499999999999996" y="19.9" width="2.3" height="10.900000000000002" rx=".8" fill="#b7b7b7"/><rect x="1.2" y="22.7" width="31.599999999999998" height="2.6999999999999993" fill="#b7b7b7"/><circle cx="9.3" cy="17.9" r="2" fill="#b7b7b7" stroke="#9c9c9c" stroke-width=".5"/><rect x="13.2" y="18.6" width="15.3" height="4.4" rx="2.2" fill="#b7b7b7" stroke="#9c9c9c" stroke-width=".5"/><rect x="4" y="20.6" width="8.5" height="2.2" rx="1" fill="#b7b7b7"/></g>
<g transform="translate(640 437)"><rect x="0.7" y="10.1" width="2.3" height="16.4" rx=".8" fill="#b7b7b7"/><rect x="31.2" y="14.5" width="2.3" height="12.0" rx=".8" fill="#b7b7b7"/><rect x="0.7" y="18.8" width="32.8" height="2.599999999999998" fill="#b7b7b7"/><circle cx="9" cy="11.6" r="2.2" fill="#b7b7b7" stroke="#9c9c9c" stroke-width=".5"/><rect x="11.6" y="13.2" width="17.5" height="5.4" rx="2.7" fill="#b7b7b7" stroke="#9c9c9c" stroke-width=".5"/><rect x="3.4" y="16.3" width="8" height="2.4" rx="1" fill="#b7b7b7"/></g>
<g transform="translate(683 437)"><path d="M6.8 17.7 L17.1 6.8 L26.9 17.7 H24.7 V30.8 H19 V23.2 H15.1 V30.8 H9 V17.7 Z" fill="#b7b7b7" stroke="#b7b7b7" stroke-width=".8" stroke-linejoin="round"/></g>
<g transform="translate(726 437)"><path d="M3.4 11.7 L6.8 7.3" stroke="#b7b7b7" stroke-width="1.7"/><path d="M7.9 7.7 L11.3 3.3" stroke="#b7b7b7" stroke-width="1.7"/><path d="M10.4 12.7 L13.8 8.3" stroke="#b7b7b7" stroke-width="1.7"/><path d="M14.4 7.2 L17.8 2.8" stroke="#b7b7b7" stroke-width="1.7"/><path d="M16.9 10.2 L20.299999999999997 5.8" stroke="#b7b7b7" stroke-width="1.7"/><path d="M21.4 5.2 L24.799999999999997 0.7999999999999998" stroke="#b7b7b7" stroke-width="1.7"/><path d="M23.4 10.7 L26.799999999999997 6.3" stroke="#b7b7b7" stroke-width="1.7"/><path d="M27.4 7.2 L30.799999999999997 2.8" stroke="#b7b7b7" stroke-width="1.7"/><path d="M28.4 14.2 L31.799999999999997 9.8" stroke="#b7b7b7" stroke-width="1.7"/><path d="M31.9 10.2 L35.3 5.8" stroke="#b7b7b7" stroke-width="1.7"/><path d="M3.9999999999999982 18.6 L17.4 10.8 L30.799999999999997 18.6 V20.8 L17.4 14 L3.9999999999999982 20.8 Z" fill="#b7b7b7"/><rect x="7.599999999999998" y="17.5" width="3.4" height="14.6" rx="1.2" fill="#b7b7b7"/><rect x="23.799999999999997" y="17.5" width="3.4" height="14.6" rx="1.2" fill="#b7b7b7"/><path d="M14 31.8 A3.4 3.2 0 0 1 20.8 31.8 Z" fill="#b7b7b7"/></g>
</g>
<g clip-path="url(#rc1)">
<g transform="translate(425 480)"><path d="M3 11.7 L6.4 7.3" stroke="#b7b7b7" stroke-width="1.7"/><path d="M7.5 7.7 L10.9 3.3" stroke="#b7b7b7" stroke-width="1.7"/><path d="M10 12.7 L13.4 8.3" stroke="#b7b7b7" stroke-width="1.7"/><path d="M14 7.2 L17.4 2.8" stroke="#b7b7b7" stroke-width="1.7"/><path d="M16.5 10.2 L19.9 5.8" stroke="#b7b7b7" stroke-width="1.7"/><path d="M21 5.2 L24.4 0.7999999999999998" stroke="#b7b7b7" stroke-width="1.7"/><path d="M23 10.7 L26.4 6.3" stroke="#b7b7b7" stroke-width="1.7"/><path d="M27 7.2 L30.4 2.8" stroke="#b7b7b7" stroke-width="1.7"/><path d="M28 14.2 L31.4 9.8" stroke="#b7b7b7" stroke-width="1.7"/><path d="M31.5 10.2 L34.9 5.8" stroke="#b7b7b7" stroke-width="1.7"/><path d="M3.4999999999999982 18.6 L16.9 10.8 L30.299999999999997 18.6 V20.8 L16.9 14 L3.4999999999999982 20.8 Z" fill="#b7b7b7"/><rect x="7.099999999999998" y="17.5" width="3.4" height="14.6" rx="1.2" fill="#b7b7b7"/><rect x="23.299999999999997" y="17.5" width="3.4" height="14.6" rx="1.2" fill="#b7b7b7"/></g>
<g transform="translate(468 480)"><path d="M7.6 9 L11 15 H9.6 L12.6 20.5 H10.8 L14.2 26.5 H8.8 V30.8 H6.6 V26.5 H1.1 L4.5 20.5 H2.8 L5.7 15 H4.4 Z" fill="#b7b7b7"/><path d="M14.2 17.7 L24 6.8 L33.8 17.7 H31.6 V30.8 H26.6 V23.2 H21.4 V30.8 H16.4 V17.7 Z" fill="#b7b7b7"/></g>
<g transform="translate(511 480)"><rect x="2.8" y="11.8" width="29.5" height="3.1" rx="1" fill="#b7b7b7"/><rect x="7.2" y="14" width="2.2" height="7.4" fill="#b7b7b7"/><rect x="25.7" y="14" width="2.2" height="7.4" fill="#b7b7b7"/></g>
<g transform="translate(554 480)"><rect x="16.1" y="2.5" width="2.2" height="27.5" fill="#b7b7b7"/><rect x="8.9" y="29.3" width="16.4" height="2.2" rx="1" fill="#b7b7b7"/><path d="M2.4 6.6 Q10 8.6 17.2 5.2 Q24.4 8.6 31.8 6.6" stroke="#b7b7b7" stroke-width="1.6" fill="none"/><path d="M0.8 22.1 L5.8 8 L10.9 22.1 M23.7 22.1 L28.7 8 L33.8 22.1" stroke="#b7b7b7" stroke-width="1" fill="none"/><path d="M0.4 22.1 H11.3 A5.5 5 0 0 1 0.4 22.1 Z M23.3 22.1 H34.2 A5.5 5 0 0 1 23.3 22.1 Z" fill="#b7b7b7"/></g>
<g transform="translate(597 480)"><path d="M16.5 0.3 C15.5 5 11.5 8.5 9.2 13.5 C7 18 6 22 7.5 26 C9 30 13 33 18.5 33.6 C24 32 27.5 27 27.4 21 C27.4 16 25 12 24.2 7.5 C23.2 10.5 22.2 12.5 20.8 14.5 C21.2 9 19.5 4 16.5 0.3 Z" fill="#b7b7b7"/><path d="M17.2 7.5 C15.2 12 18 15.5 15.4 20.5 M21.6 15.5 C20.6 19.5 23 22.5 20.4 27.5 M11.6 31 C12.8 27.5 11 25 12.4 21.5" fill="none" stroke="#fff" stroke-width="1.1" stroke-linecap="round"/></g>
<g transform="translate(640 480)"><path d="M7.23 2.91 A17.2 17.2 0 0 1 26.97 2.91 L24.31 9.79 L31.19 7.13 A17.2 17.2 0 0 1 31.19 26.87 L24.31 24.21 L26.97 31.09 A17.2 17.2 0 0 1 7.23 31.09 L9.89 24.21 L3.01 26.87 A17.2 17.2 0 0 1 3.01 7.13 L9.89 9.79 Z" fill="none" stroke="#b7b7b7" stroke-width="1.3" stroke-linejoin="round"/><path d="M9.68 4.66 A14.4 14.4 0 0 1 24.52 4.66 L23.61 10.49 L29.44 9.58 A14.4 14.4 0 0 1 29.44 24.42 L23.61 23.51 L24.52 29.34 A14.4 14.4 0 0 1 9.68 29.34 L10.59 23.51 L4.76 24.42 A14.4 14.4 0 0 1 4.76 9.58 L10.59 10.49 Z" fill="none" stroke="#b7b7b7" stroke-width="1.2" stroke-linejoin="round"/><circle cx="17.1" cy="17" r="10.6" fill="#fff" stroke="#b7b7b7" stroke-width="1.4"/><g transform="translate(17.1 17.4) scale(.56) translate(-17 -17.5)"><path d="M16.5 0.3 C15.5 5 11.5 8.5 9.2 13.5 C7 18 6 22 7.5 26 C9 30 13 33 18.5 33.6 C24 32 27.5 27 27.4 21 C27.4 16 25 12 24.2 7.5 C23.2 10.5 22.2 12.5 20.8 14.5 C21.2 9 19.5 4 16.5 0.3 Z" fill="#b7b7b7"/><path d="M17.2 7.5 C15.2 12 18 15.5 15.4 20.5 M21.6 15.5 C20.6 19.5 23 22.5 20.4 27.5 M11.6 31 C12.8 27.5 11 25 12.4 21.5" fill="none" stroke="#fff" stroke-width="1.1" stroke-linecap="round"/></g></g>
<g transform="translate(683 480)"><path d="M7.23 2.91 A17.2 17.2 0 0 1 26.97 2.91 L24.31 9.79 L31.19 7.13 A17.2 17.2 0 0 1 31.19 26.87 L24.31 24.21 L26.97 31.09 A17.2 17.2 0 0 1 7.23 31.09 L9.89 24.21 L3.01 26.87 A17.2 17.2 0 0 1 3.01 7.13 L9.89 9.79 Z" fill="none" stroke="#b7b7b7" stroke-width="1.3" stroke-linejoin="round"/><path d="M9.68 4.66 A14.4 14.4 0 0 1 24.52 4.66 L23.61 10.49 L29.44 9.58 A14.4 14.4 0 0 1 29.44 24.42 L23.61 23.51 L24.52 29.34 A14.4 14.4 0 0 1 9.68 29.34 L10.59 23.51 L4.76 24.42 A14.4 14.4 0 0 1 4.76 9.58 L10.59 10.49 Z" fill="none" stroke="#b7b7b7" stroke-width="1.2" stroke-linejoin="round"/><circle cx="17.1" cy="17" r="10.6" fill="#fff"/><g transform="translate(17.1 17.2) scale(.66) translate(-17 -17.5)"><path d="M16.5 0.3 C15.5 5 11.5 8.5 9.2 13.5 C7 18 6 22 7.5 26 C9 30 13 33 18.5 33.6 C24 32 27.5 27 27.4 21 C27.4 16 25 12 24.2 7.5 C23.2 10.5 22.2 12.5 20.8 14.5 C21.2 9 19.5 4 16.5 0.3 Z" fill="#b7b7b7"/><path d="M17.2 7.5 C15.2 12 18 15.5 15.4 20.5 M21.6 15.5 C20.6 19.5 23 22.5 20.4 27.5 M11.6 31 C12.8 27.5 11 25 12.4 21.5" fill="none" stroke="#fff" stroke-width="1.1" stroke-linecap="round"/></g></g>
<g transform="translate(726 480)"><path d="M2 31.2 Q4 30 6 31.2 T10 31.2 T14 31.2 T18 31.2 T22 31.2 T26 31.2 T30 31.2 L32 31.2" stroke="#b7b7b7" stroke-width="1.4" fill="none"/><path d="M6.5 30 Q8 26 10.5 26 L11.5 23 H22.5 L23.5 26 Q26 26 27.5 30 Z" fill="#b7b7b7"/><path d="M17 23 V2.5 M16 22 Q14 5 9.5 7 Q6.5 9 5.5 15.5 M18 22 Q20 5 24.5 7 Q27.5 9 28.5 15.5 M15.5 22 Q14.5 14 11.5 15 Q9.5 16 9 20 M18.5 22 Q19.5 14 22.5 15 Q24.5 16 25 20" stroke="#b7b7b7" stroke-width="1.2" fill="none"/></g>
</g>
<g clip-path="url(#rc2)">
<g transform="translate(425 523)"><text x="17.2" y="29.3" font-family="Liberation Serif, serif" font-weight="bold" font-size="37" fill="#b7b7b7" text-anchor="middle">i</text></g>
<g transform="translate(468 523)"><path d="M2.2 10.5 L17.5 0.9 L31.6 14.5 L16.4 24.3 Z" fill="#b7b7b7"/><path d="M2.2 10.5 L16.4 24.3 L31.6 14.5 V23 L16.4 33 L2.2 19 Z" fill="#d2d2d2"/><path d="M2.2 13.5 L16.4 27.2 L31.6 17.4 M2.2 16.3 L16.4 30 L31.6 20.2" stroke="#b7b7b7" stroke-width=".9" fill="none"/><path d="M2.2 10.5 V19 L16.4 33 V24.3 Z" fill="#b7b7b7" opacity=".35"/></g>
<g transform="translate(511 523)"><g transform="translate(0 0) scale(1.0)"><circle cx="8.6" cy="23.6" r="7.2" fill="none" stroke="#c8c8c8" stroke-width="3.8"/><circle cx="25.7" cy="11.8" r="7.2" fill="none" stroke="#c8c8c8" stroke-width="3.8"/><path d="M3.2 18 A7.8 7.8 0 0 1 14.5 17.6" fill="none" stroke="#b7b7b7" stroke-width="3.4"/><path d="M19 8 A7.8 7.8 0 0 1 25 4" fill="none" stroke="#b7b7b7" stroke-width="3.4"/><path d="M8.5 16 L10.5 6 Q11 3.5 13.5 3.2 L18.5 5.5" fill="none" stroke="#b7b7b7" stroke-width="2.2"/><path d="M6.5 30.6 L10.5 30.9 M29 18 L31.5 15.5" stroke="#b7b7b7" stroke-width="3"/></g></g>
<g transform="translate(554 523)"><path d="M5 3.2 Q8.5 4.5 11.5 1.2 Q14.5 -0.5 17.6 1.6 Q20.7 -0.5 23.7 1.2 Q26.7 4.5 30.2 3.2 L33.6 7.5 Q31.8 10 33.2 14 Q35 24.5 17.6 34.2 Q0.2 24.5 2 14 Q3.4 10 1.6 7.5 Z" fill="#fff" stroke="#b7b7b7" stroke-width="1.2"/><g transform="translate(6.2 3.2) scale(0.68)"><circle cx="8.6" cy="23.6" r="7.2" fill="none" stroke="#c8c8c8" stroke-width="3.8"/><circle cx="25.7" cy="11.8" r="7.2" fill="none" stroke="#c8c8c8" stroke-width="3.8"/><path d="M3.2 18 A7.8 7.8 0 0 1 14.5 17.6" fill="none" stroke="#b7b7b7" stroke-width="3.4"/><path d="M19 8 A7.8 7.8 0 0 1 25 4" fill="none" stroke="#b7b7b7" stroke-width="3.4"/><path d="M8.5 16 L10.5 6 Q11 3.5 13.5 3.2 L18.5 5.5" fill="none" stroke="#b7b7b7" stroke-width="2.2"/><path d="M6.5 30.6 L10.5 30.9 M29 18 L31.5 15.5" stroke="#b7b7b7" stroke-width="3"/></g></g>
<g transform="translate(597 523)"><rect x="5.6" y="8.4" width="22.799999999999997" height="16.5" fill="#fff" stroke="#b7b7b7" stroke-width="1.7"/><path d="M6.1 9.200000000000001 L17.0 18.630000000000003 L27.9 9.200000000000001 M6.1 24.099999999999998 L13.6 16.65 M27.9 24.099999999999998 L20.4 16.65" stroke="#b7b7b7" stroke-width="1.4" fill="none"/></g>
<g transform="translate(640 523)"><circle cx="17.1" cy="16.6" r="16.6" fill="none" stroke="#b7b7b7" stroke-width="1.6"/><rect x="6.2" y="8.8" width="22.0" height="15.599999999999998" fill="#fff" stroke="#b7b7b7" stroke-width="1.7"/><path d="M6.7 9.600000000000001 L17.2 18.472 L27.7 9.600000000000001 M6.7 23.599999999999998 L13.799999999999999 16.6 M27.7 23.599999999999998 L20.599999999999998 16.6" stroke="#b7b7b7" stroke-width="1.4" fill="none"/></g>
<g transform="translate(683 523)"><rect x="2.6" y="0.9" width="29.4" height="31.5" fill="#fff" stroke="#b7b7b7" stroke-width="1.5"/><circle cx="17.4" cy="7.6" r="3.7" fill="#e2e2e2" stroke="#c4c4c4" stroke-width=".7"/><path d="M11.5 13 Q11.5 11.5 13 11.5 H21.8 Q23.3 11.5 23.3 13 V24 H21.5 V31.5 H13.3 V24 H11.5 Z" fill="#e2e2e2" stroke="#c4c4c4" stroke-width=".7"/><path d="M9.4 16 Q9.2 13.5 11 13.5 V25.5 Q9.4 25.5 9.4 24 Z M25.4 16 Q25.6 13.5 23.8 13.5 V25.5 Q25.4 25.5 25.4 24 Z" fill="#e2e2e2" stroke="#c4c4c4" stroke-width=".5"/><path d="M11.2 1 V32 M23.6 1 V32" stroke="#b7b7b7" stroke-width="1.6"/></g>
<g transform="translate(726 523)"><g transform="rotate(0 17 19)"><path d="M13.4 2.6 L19.6 2.6 L23.4 9 L25.8 7.6 L24 14.6 L16.8 13.2 L19.4 11.6 L17.2 7.8 L14.6 7.8 L12.2 12 L8.2 9.6 L11 4.2 Q11.8 2.6 13.4 2.6 Z" fill="#b7b7b7"/></g><g transform="rotate(120 17 19)"><path d="M13.4 2.6 L19.6 2.6 L23.4 9 L25.8 7.6 L24 14.6 L16.8 13.2 L19.4 11.6 L17.2 7.8 L14.6 7.8 L12.2 12 L8.2 9.6 L11 4.2 Q11.8 2.6 13.4 2.6 Z" fill="#b7b7b7"/></g><g transform="rotate(240 17 19)"><path d="M13.4 2.6 L19.6 2.6 L23.4 9 L25.8 7.6 L24 14.6 L16.8 13.2 L19.4 11.6 L17.2 7.8 L14.6 7.8 L12.2 12 L8.2 9.6 L11 4.2 Q11.8 2.6 13.4 2.6 Z" fill="#b7b7b7"/></g></g>
</g>
<g clip-path="url(#rc3)">
<g transform="translate(425 566)"><rect x="11.2" y="3.8" width="12.2" height="3" rx="1.2" fill="#b7b7b7"/><path d="M17.2 5 V31.3 M15.6 6.5 L7 26.5 M18.8 6.5 L27.2 26.5" stroke="#b7b7b7" stroke-width="2.2" stroke-linecap="round" fill="none"/></g>
<g transform="translate(468 566)"><path d="M25.6 6.2 Q17 10 12.6 17.6 Q9.4 23.4 9.4 28.6" stroke="#b7b7b7" stroke-width="5.6" fill="none" stroke-linecap="butt"/><path d="M22.6 2.4 Q24 1.4 25.4 2.2 L29.4 4.6 Q30.6 5.6 29.8 7 L27.6 10.4 Q26.6 11.6 25.2 10.8 L21.4 8.4 Q20.2 7.4 20.8 6 Z" fill="#b7b7b7"/><path d="M6.4 24.2 Q7.4 23.2 8.8 23.8 L13.4 26.6 Q14.6 27.6 13.8 29 L11.6 32.4 Q10.6 33.6 9.2 32.8 L5.2 30.4 Q4 29.4 4.6 28 Z" fill="#b7b7b7"/><path d="M26.6 3.2 L29.4 5 M6 30 L9.4 32.2" stroke="#d4d4d4" stroke-width=".8"/></g>
<g transform="translate(511 566)"><circle cx="7.4" cy="4.9" r="2.3" fill="#b7b7b7"/><path d="M4.4 7.999999999999999 H10.4 Q12.0 7.999999999999999 12.5 9.799999999999999 L14.299999999999999 18.5 L12.7 19.0 L10.600000000000001 11.799999999999999 L13.0 23.0 H10.4 V31.1 H8.0 V23.0 H6.800000000000001 V31.1 H4.4 V23.0 H1.8000000000000007 L4.2 11.799999999999999 L2.1000000000000005 19.0 L0.5000000000000006 18.5 L2.3000000000000007 9.799999999999999 Q2.8000000000000007 7.999999999999999 4.4 7.999999999999999 Z" fill="#b7b7b7"/><rect x="16" y="2.4" width="1.8" height="29" fill="#b7b7b7"/><circle cx="26.6" cy="4.9" r="2.3" fill="#b7b7b7"/><path d="M22.400000000000002 7.999999999999999 H30.8 Q32.6 7.999999999999999 32.6 9.799999999999999 V19.0 Q31.700000000000003 20.0 30.8 19.0 V11.5 H30.0 V31.1 Q28.200000000000003 32.1 27.1 31.1 V20.5 H26.1 V31.1 Q25.0 32.1 23.200000000000003 31.1 V11.5 H22.400000000000002 V19.0 Q21.5 20.0 20.6 19.0 V9.799999999999999 Q20.6 7.999999999999999 22.400000000000002 7.999999999999999 Z" fill="#b7b7b7"/></g>
<g transform="translate(554 566)"><circle cx="9.6" cy="6.2" r="2.4" fill="#b7b7b7"/><path d="M9.4 8.5 V19.5 H19.5 L23.6 28.6 L28 27" stroke="#b7b7b7" stroke-width="2.2" fill="none" stroke-linejoin="round" stroke-linecap="round"/><path d="M9.4 13.6 H17.4" stroke="#b7b7b7" stroke-width="1.8" stroke-linecap="round"/><path d="M6.4 14.6 A9.4 9.4 0 1 0 20 26.6" fill="none" stroke="#b7b7b7" stroke-width="1.8" stroke-linecap="round"/><text x="14.2" y="8" font-family="Liberation Sans, sans-serif" font-weight="bold" font-size="10.4" fill="#b7b7b7" stroke="#b7b7b7" stroke-width=".5" letter-spacing="-.3">WC</text></g>
<g transform="translate(597 566)"><circle cx="8.6" cy="3.0999999999999996" r="2.3" fill="#b7b7b7"/><path d="M3.5999999999999996 6.199999999999999 H13.599999999999998 Q15.399999999999999 6.199999999999999 15.399999999999999 7.999999999999999 V17.2 Q14.499999999999998 18.2 13.599999999999998 17.2 V9.7 H12.799999999999999 V31.3 Q10.2 32.3 9.1 31.3 V18.7 H8.1 V31.3 Q7.0 32.3 4.4 31.3 V9.7 H3.5999999999999996 V17.2 Q2.6999999999999997 18.2 1.7999999999999998 17.2 V7.999999999999999 Q1.7999999999999998 6.199999999999999 3.5999999999999996 6.199999999999999 Z" fill="#b7b7b7"/><text x="15.2" y="32.6" font-family="Liberation Sans, sans-serif" font-weight="bold" font-size="11" fill="#b7b7b7" stroke="#b7b7b7" stroke-width=".5" letter-spacing="-.3">WC</text></g>
<g transform="translate(640 566)"><circle cx="8.6" cy="2.5" r="2.3" fill="#b7b7b7"/><path d="M5.6 5.6 H11.6 Q13.2 5.6 13.7 7.3999999999999995 L16.700000000000003 16.1 L15.100000000000001 16.6 L11.8 9.399999999999999 L14.2 20.6 H11.6 V31.4 H9.2 V20.6 H8.0 V31.4 H5.6 V20.6 H3.0 L5.3999999999999995 9.399999999999999 L2.0999999999999996 16.6 L0.49999999999999967 16.1 L3.5 7.3999999999999995 Q4.0 5.6 5.6 5.6 Z" fill="#b7b7b7"/><text x="15.2" y="32.6" font-family="Liberation Sans, sans-serif" font-weight="bold" font-size="11" fill="#b7b7b7" stroke="#b7b7b7" stroke-width=".5" letter-spacing="-.3">WC</text></g>
<g transform="translate(683 566)"><circle cx="23.4" cy="3.3" r="2.3" fill="#b7b7b7"/><path d="M20.4 6.3999999999999995 H26.4 Q28.2 6.3999999999999995 28.2 8.2 V17.4 Q27.3 18.4 26.4 17.4 V9.899999999999999 H25.599999999999998 V31.5 Q25.0 32.5 23.9 31.5 V18.9 H22.9 V31.5 Q21.799999999999997 32.5 21.2 31.5 V9.899999999999999 H20.4 V17.4 Q19.499999999999996 18.4 18.599999999999998 17.4 V8.2 Q18.599999999999998 6.3999999999999995 20.4 6.3999999999999995 Z" fill="#b7b7b7"/><path d="M19.5 11.5 L11.5 13.5" stroke="#b7b7b7" stroke-width="1.8" stroke-linecap="round"/><path d="M7.2 21 L9.4 32 H15.2 L17.4 21 H15.4 L13.8 30.2 H10.8 L9.2 21 Z" fill="#b7b7b7"/><path d="M11 16 L12.6 17.4 M12.4 19 L10.6 20.4 M13.6 21.6 L12 23.4 M9.8 18 L11 19" stroke="#b7b7b7" stroke-width="1.1"/></g>
<g transform="translate(726 566)"><path d="M17.3 1.8 L28.8 13.8 H22.7 V29.4 Q22.7 31.9 20.2 31.9 H14.3 Q11.8 31.9 11.8 29.4 V13.8 H5.3 Z" fill="#b7b7b7" stroke="#a8a8a8" stroke-width=".5" stroke-linejoin="round"/></g>
</g>
<g clip-path="url(#rc4)">
<g transform="translate(425 609)"><path d="M16.2 4.6 L33.2 29.7 L16.2 21.4 L0.9 29.7 Z" fill="#c6c6c6" stroke="#aaa" stroke-width=".5"/></g>
<g transform="translate(468 609)"><path d="M16.8 4 L29.9 29.7 L16.8 23.6 L3.9 29.7 Z" fill="#c6c6c6" stroke="#aaa" stroke-width=".5"/><path d="M16.8 4 L29.9 29.7 L16.8 23.6 Z" fill="#bababa"/><path d="M16.8 4 V23.6" stroke="#9e9e9e" stroke-width=".8"/></g>
<g transform="translate(511 609)"><path d="M16.8 0.3 L22.9 9.7 L22.2 10.2 L18.7 6.8 V33.7 H16.8 Z" fill="#c6c6c6" stroke="#a6a6a6" stroke-width=".5"/></g>
<g transform="translate(554 609)"><path d="M17 0.9 L31.2 32.6 L17 24.3 L3 32.6 Z" fill="#c6c6c6" stroke="#aaa" stroke-width=".5"/></g>
<g transform="translate(597 609)"><path d="M16.9 0.3 L22.3 10.8 H18.9 V32.6 H14.9 V10.8 H11.4 Z" fill="#c6c6c6" stroke="#aaa" stroke-width=".5"/></g>
<g transform="translate(640 609)"><circle cx="17.1" cy="16.6" r="15" fill="none" stroke="#c4c4c4" stroke-width="2"/><path d="M17.1 2.5 V16.6" stroke="#c4c4c4" stroke-width="1.8"/></g>
<g transform="translate(683 609)"><text x="17.1" y="8.9" font-family="Liberation Sans, sans-serif" font-size="13" fill="#c0c0c0" text-anchor="middle">N</text><circle cx="17.1" cy="36.3" r="16.8" fill="#fff" stroke="#111" stroke-width="1.8"/><circle cx="17.1" cy="36.3" r="13.8" fill="none" stroke="#555" stroke-width=".6"/><circle cx="17.1" cy="36.3" r="12" fill="none" stroke="#777" stroke-width=".5"/><path d="M17.1 10.5 L17.1 38.5 L-15.14 90.5 L-15.46 90.5 Z" fill="#adadad"/><path d="M17.1 10.5 L49.66 90.5 L49.34 90.5 L17.1 38.5 Z" fill="#cbcbcb"/><path d="M17.1 10.5 L49.66 90.5 L49.34 90.5 L17.1 38.5 L-15.14 90.5 L-15.46 90.5 Z" fill="none" stroke="#111" stroke-width="1.9" stroke-linejoin="miter"/><path d="M17.1 12.5 V36.5" stroke="#999" stroke-width=".5"/></g>
<g transform="translate(726 609)"><path d="M17.3 -0.4 L17.3 29.8 L-7.60 79.6 L-11.10 79.6 Z" fill="#adadad"/><path d="M17.3 -0.4 L45.70 79.6 L42.20 79.6 L17.3 29.8 Z" fill="#cbcbcb"/><path d="M17.3 -0.4 L45.70 79.6 L42.20 79.6 L17.3 29.8 L-7.60 79.6 L-11.10 79.6 Z" fill="none" stroke="#111" stroke-width="2" stroke-linejoin="miter"/><path d="M17.3 2.6 V27.6" stroke="#999" stroke-width=".5"/></g>
</g>
<g clip-path="url(#rc5)">
<g transform="translate(425 652)"><text x="16.8" y="9.2" font-family="Liberation Sans, sans-serif" font-size="13" fill="#c0c0c0" text-anchor="middle">N</text><path d="M16.8 11.5 L7.4 35 L16.8 35 Z" fill="#b0b0b0"/><path d="M16.8 11.5 L26.2 35 L16.8 35 Z" fill="#d4d4d4"/><path d="M6.6 36 L16.8 11.5 L27 36" fill="none" stroke="#111" stroke-width="2"/></g>
<g transform="translate(468 652)"><circle cx="17" cy="16.6" r="17.3" fill="#fff" stroke="#222" stroke-width="1"/><path d="M25.49 8.11 L20.00 16.60 L25.49 25.09 L17.00 19.60 L8.51 25.09 L14.00 16.60 L8.51 8.11 L17.00 13.60Z" fill="#dadada"/><path d="M17.00 0.10 L19.40 14.20 L33.50 16.60 L19.40 19.00 L17.00 33.10 L14.60 19.00 L0.50 16.60 L14.60 14.20Z" fill="#c4c4c4"/></g>
<g transform="translate(511 652)"><path d="M25.49 8.11 L20.00 16.60 L25.49 25.09 L17.00 19.60 L8.51 25.09 L14.00 16.60 L8.51 8.11 L17.00 13.60Z" fill="#dedede"/><path d="M17.00 -0.60 L20.11 13.49 L34.20 16.60 L20.11 19.71 L17.00 33.80 L13.89 19.71 L-0.20 16.60 L13.89 13.49Z" fill="#b8b8b8" stroke="#111" stroke-width="1.9" stroke-linejoin="miter"/></g>
<g transform="translate(554 652)"><path d="M17.20 3.20 L20.45 13.75 L31.00 17.00 L20.45 20.25 L17.20 30.80 L13.95 20.25 L3.40 17.00 L13.95 13.75Z" fill="#d8d8d8" stroke="#8a8a8a" stroke-width=".7"/><path d="M23.14 11.06 L20.20 17.00 L23.14 22.94 L17.20 20.00 L11.26 22.94 L14.20 17.00 L11.26 11.06 L17.20 14.00Z" fill="#cfcfcf"/><circle cx="17.2" cy="17" r="6.1" fill="#fff" stroke="#222" stroke-width="1"/></g>
<g transform="translate(597 652)"><path d="M4.60 -0.60 L5.93 2.97 L9.74 3.13 L6.76 5.50 L7.77 9.17 L4.60 7.07 L1.43 9.17 L2.44 5.50 L-0.54 3.13 L3.27 2.97Z" fill="#c4c4c4"/><path d="M72.40 -0.60 L73.73 2.97 L77.54 3.13 L74.56 5.50 L75.57 9.17 L72.40 7.07 L69.23 9.17 L70.24 5.50 L67.26 3.13 L71.07 2.97Z" fill="#c4c4c4"/><path d="M4.8 10.5 V34 M72.5 10.5 V34" stroke="#111" stroke-width="1.9"/><path d="M4.9 22.3 Q22 22.5 33.5 28.5 M72.4 22.3 Q55 22 44 28" stroke="#111" stroke-width="1.3" stroke-dasharray="1.8 1.3" fill="none"/><path d="M31.4 33 L33.6 28.4 L36 33 M40.6 33 L43.8 26.6 L46.8 33" stroke="#111" stroke-width="2" fill="none"/></g>
<g transform="translate(683 652)"><circle cx="17.1" cy="27.5" r="16.8" fill="#fff" stroke="#111" stroke-width="1.8"/><circle cx="17.1" cy="27.5" r="13.8" fill="none" stroke="#555" stroke-width=".6"/><circle cx="17.1" cy="27.5" r="12" fill="none" stroke="#777" stroke-width=".5"/><path d="M17.1 0 L17.1 28 L-15.14 80 L-15.46 80 Z" fill="#adadad"/><path d="M17.1 0 L49.66 80 L49.34 80 L17.1 28 Z" fill="#cbcbcb"/><path d="M17.1 0 L49.66 80 L49.34 80 L17.1 28 L-15.14 80 L-15.46 80 Z" fill="none" stroke="#111" stroke-width="1.9" stroke-linejoin="miter"/><path d="M17.1 2 V26" stroke="#999" stroke-width=".5"/></g>
<g transform="translate(726 652)"><path d="M17.3 0 L17.3 30.2 L-7.60 80 L-11.10 80 Z" fill="#adadad"/><path d="M17.3 0 L45.70 80 L42.20 80 L17.3 30.2 Z" fill="#cbcbcb"/><path d="M17.3 0 L45.70 80 L42.20 80 L17.3 30.2 L-7.60 80 L-11.10 80 Z" fill="none" stroke="#111" stroke-width="2" stroke-linejoin="miter"/><path d="M17.3 3 V28" stroke="#999" stroke-width=".5"/></g>
</g>
</svg>
<div style="left:184px;top:691px;width:536px;height:25px;border:1px solid #aca8a2;border-radius:3px;background:#fff;box-sizing:border-box;"></div>
<div style="left:185px;top:693px;width:510px;height:22px;overflow:hidden;"></div>
<span id="t53" class="t" style="left:184.5px;top:693.5px;height:20px;line-height:20px;font-size:15px;color:#000;letter-spacing:0.274px;clip-path:inset(0 0 0 1.5px);">ents/</span>
<span id="t54" class="t" style="left:218.4px;top:693.5px;height:20px;line-height:20px;font-size:15px;color:#000;letter-spacing:-1.404px;">GIS/</span>
<span id="t55" class="t" style="left:242.8px;top:693.5px;height:20px;line-height:20px;font-size:15px;color:#000;letter-spacing:-1.258px;">QGIS/</span>
<span id="t56" class="t" style="left:278.4px;top:693.5px;height:20px;line-height:20px;font-size:15px;color:#000;letter-spacing:0.587px;">TrainingManual/</span>
<span id="t57" class="t" style="left:394.5px;top:693.5px;height:20px;line-height:20px;font-size:15px;color:#000;letter-spacing:-0.378px;">exercise_</span>
<span id="t58" class="t" style="left:456px;top:693.5px;height:20px;line-height:20px;font-size:15px;color:#000;letter-spacing:0.045px;">data/</span>
<span id="t59" class="t" style="left:490px;top:693.5px;height:20px;line-height:20px;font-size:15px;color:#000;letter-spacing:0.564px;">symbols/</span>
<span id="t60" class="t" style="left:554.7px;top:693.5px;height:20px;line-height:20px;font-size:15px;color:#000;letter-spacing:-0.074px;">landuse_</span>
<span id="t61" class="t" style="left:615.5px;top:693.5px;height:20px;line-height:20px;font-size:15px;color:#000;letter-spacing:-0.033px;">symbol.svg</span>
<svg class="a" style="left:698px;top:699px" width="14" height="9" viewBox="0 0 14 9"><path d="M4.2 0.3 H12.6 Q13.8 0.3 13.8 1.5 V7.5 Q13.8 8.7 12.6 8.7 H4.2 L0.2 4.5 Z" fill="#a2a2a0"/><path d="M6.6 2.3 L10.8 6.7 M10.8 2.3 L6.6 6.7" stroke="#fff" stroke-width="1.4"/></svg>
<div style="left:726px;top:692px;width:29px;height:24px;border:1px solid #aca8a2;border-radius:3px;background:linear-gradient(#fbfaf9,#ebe8e4);box-sizing:border-box;"></div>
<span id="t62" class="t" style="left:733.4px;top:694.5px;height:20px;line-height:20px;font-size:15px;color:#000;letter-spacing:0.828px;">...</span>
<div style="left:755px;top:692px;width:12px;height:24px;border:1px solid #aca8a2;border-radius:3px;background:linear-gradient(#fbfaf9,#ebe8e4);box-sizing:border-box;"></div>
<svg class="a" style="left:756.2px;top:701px" width="9" height="5" viewBox="0 0 9 5"><path d="M0 0 L9 0 L4.5 5 Z" fill="#3a3a3a"/></svg>
<svg class="a" style="left:776px;top:696px" width="25" height="17" viewBox="0 0 25 17"><path d="M0 7.5 L5.5 2.2 V12.8 Z" fill="#8b8e93"/><rect x="5.5" y="0.5" width="12.5" height="15" fill="#fff" stroke="#7c7c7c" stroke-width="1"/><path d="M6 8 H17.5" stroke="#a2a2a2" stroke-width=".8"/><rect x="8" y="3" width="7.6" height="2" fill="#555"/><rect x="8" y="11" width="8" height="1.1" fill="#444"/><path d="M15.7 11 H24.2 L20 16 Z" fill="#333"/></svg>
<div style="left:175px;top:734px;width:14px;height:14px;background:#fff;border:1px solid #b5b1ac;box-sizing:border-box;border-radius:1px;"></div>
<svg class="a" style="left:177px;top:736px" width="10" height="10" viewBox="0 0 10 10"><path d="M1.2 5.2 L4 9 L9 1.2" fill="none" stroke="#111" stroke-width="1.7"/></svg>
<span id="t63" class="t" style="left:194px;top:732.0px;height:20px;line-height:20px;font-size:15px;color:#000;letter-spacing:-0.004px;">Enable symbol layer</span>
<svg class="a" style="left:345px;top:734px" width="25" height="17" viewBox="0 0 25 17"><path d="M0 7.5 L5.5 2.2 V12.8 Z" fill="#8b8e93"/><rect x="5.5" y="0.5" width="12.5" height="15" fill="#fff" stroke="#7c7c7c" stroke-width="1"/><path d="M6 8 H17.5" stroke="#a2a2a2" stroke-width=".8"/><rect x="8" y="3" width="7.6" height="2" fill="#555"/><rect x="8" y="11" width="8" height="1.1" fill="#444"/><path d="M15.7 11 H24.2 L20 16 Z" fill="#333"/></svg>
<div style="left:408px;top:734px;width:14px;height:14px;background:#fff;border:1px solid #b5b1ac;box-sizing:border-box;border-radius:1px;"></div>
<span id="t64" class="t" style="left:427px;top:732.0px;height:20px;line-height:20px;font-size:15px;color:#000;letter-spacing:0.326px;">Draw effects</span>
<div style="left:527px;top:730px;width:24px;height:23px;border:1px solid #aca8a2;border-radius:3px;background:linear-gradient(#fbfaf9,#ebe8e4);box-sizing:border-box;border-color:#c6c2bc;"></div>
<svg class="a" style="left:532.3px;top:734.3px" width="12.4" height="12" viewBox="0 0 16 16"><path d="M8 1 L10 6 L15.3 6.3 L11.2 9.7 L12.6 15 L8 12 L3.4 15 L4.8 9.7 L0.7 6.3 L6 6 Z" fill="#d6d2c2" stroke="#cdc8b6" stroke-width=".8"/></svg>
<svg class="a" style="left:179px;top:782px" width="7" height="10" viewBox="0 0 7 10"><path d="M0 0 L7 5 L0 10 Z" fill="#333"/></svg>
<span id="t65" class="t" style="left:196px;top:777.0px;height:20px;line-height:20px;font-size:15px;color:#000;font-weight:bold;letter-spacing:-0.092px;">Layer Rendering</span>
<div style="left:174px;top:801px;width:80px;height:25px;border:1px solid #aca8a2;border-radius:3px;background:linear-gradient(#fbfaf9,#ebe8e4);box-sizing:border-box;"></div>
<svg class="a" style="left:189px;top:805px" width="16" height="16" viewBox="0 0 16 16"><defs><linearGradient id="hg" x1="0" y1="0" x2="0" y2="1"><stop offset="0" stop-color="#76b0ea"/><stop offset=".5" stop-color="#4186d2"/><stop offset="1" stop-color="#2c66b0"/></linearGradient></defs><circle cx="8" cy="8" r="7.6" fill="url(#hg)" stroke="#2e62a6" stroke-width=".7"/></svg>
<span id="t66" class="t" style="left:193.5px;top:803.5px;height:20px;line-height:20px;font-size:13px;color:#fff;font-weight:bold;">?</span>
<span id="t67" class="t" style="left:206px;top:803.5px;height:20px;line-height:20px;font-size:15px;color:#000;letter-spacing:0.535px;">Help</span>
<div style="left:260px;top:801px;width:80px;height:25px;border:1px solid #aca8a2;border-radius:3px;background:linear-gradient(#fbfaf9,#ebe8e4);box-sizing:border-box;"></div>
<span id="t68" class="t" style="left:277px;top:803.5px;height:20px;line-height:20px;font-size:15px;color:#000;letter-spacing:0.128px;">Style</span>
<svg class="a" style="left:328px;top:812px" width="7" height="4" viewBox="0 0 7 4"><path d="M0 0 L7 0 L3.5 4 Z" fill="#3c3c3c"/></svg>
<div style="left:570px;top:801px;width:80px;height:25px;border:1px solid #aca8a2;border-radius:3px;background:linear-gradient(#fbfaf9,#ebe8e4);box-sizing:border-box;"></div>
<span id="t69" class="t" style="left:598px;top:803.5px;height:20px;line-height:20px;font-size:15px;color:#000;letter-spacing:0.294px;">Apply</span>
<div style="left:656px;top:801px;width:80px;height:25px;border:1px solid #aca8a2;border-radius:3px;background:linear-gradient(#fbfaf9,#ebe8e4);box-sizing:border-box;"></div>
<span id="t70" class="t" style="left:681px;top:803.5px;height:20px;line-height:20px;font-size:15px;color:#000;letter-spacing:-0.131px;"><u>C</u>ancel</span>
<div style="left:742px;top:801px;width:80px;height:25px;border:1px solid #aca8a2;border-radius:3px;background:linear-gradient(#fbfaf9,#ebe8e4);box-sizing:border-box;border-color:#3a7fb9;box-shadow:inset 0 0 0 1px #a4cbe8;background:linear-gradient(#f6f9fb,#e2ebf2);"></div>
<span id="t71" class="t" style="left:779.5px;top:803.5px;height:20px;line-height:20px;font-size:15px;color:#000;letter-spacing:-0.188px;"><u>O</u>K</span>
<svg class="a" style="left:581px;top:806px" width="16" height="16" viewBox="0 0 16 16"><path d="M0.8 8.8 L3.8 6.6 L6.4 10.2 L12.6 0.8 L15.4 2.4 L7.4 15.4 L5.2 15.4 Z" fill="#a3d23c" stroke="#6f9f1f" stroke-width=".9" stroke-linejoin="round"/></svg>
<svg class="a" style="left:762px;top:806px" width="16" height="16" viewBox="0 0 16 16"><path d="M0.8 8.8 L3.8 6.6 L6.4 10.2 L12.6 0.8 L15.4 2.4 L7.4 15.4 L5.2 15.4 Z" fill="#a3d23c" stroke="#6f9f1f" stroke-width=".9" stroke-linejoin="round"/></svg>
<svg class="a" style="left:667px;top:808px" width="12" height="12" viewBox="0 0 12 12"><path d="M1.2 1.2 L10.8 10.8 M10.8 1.2 L1.2 10.8" stroke="#505050" stroke-width="3.3"/></svg>
</body></html>
